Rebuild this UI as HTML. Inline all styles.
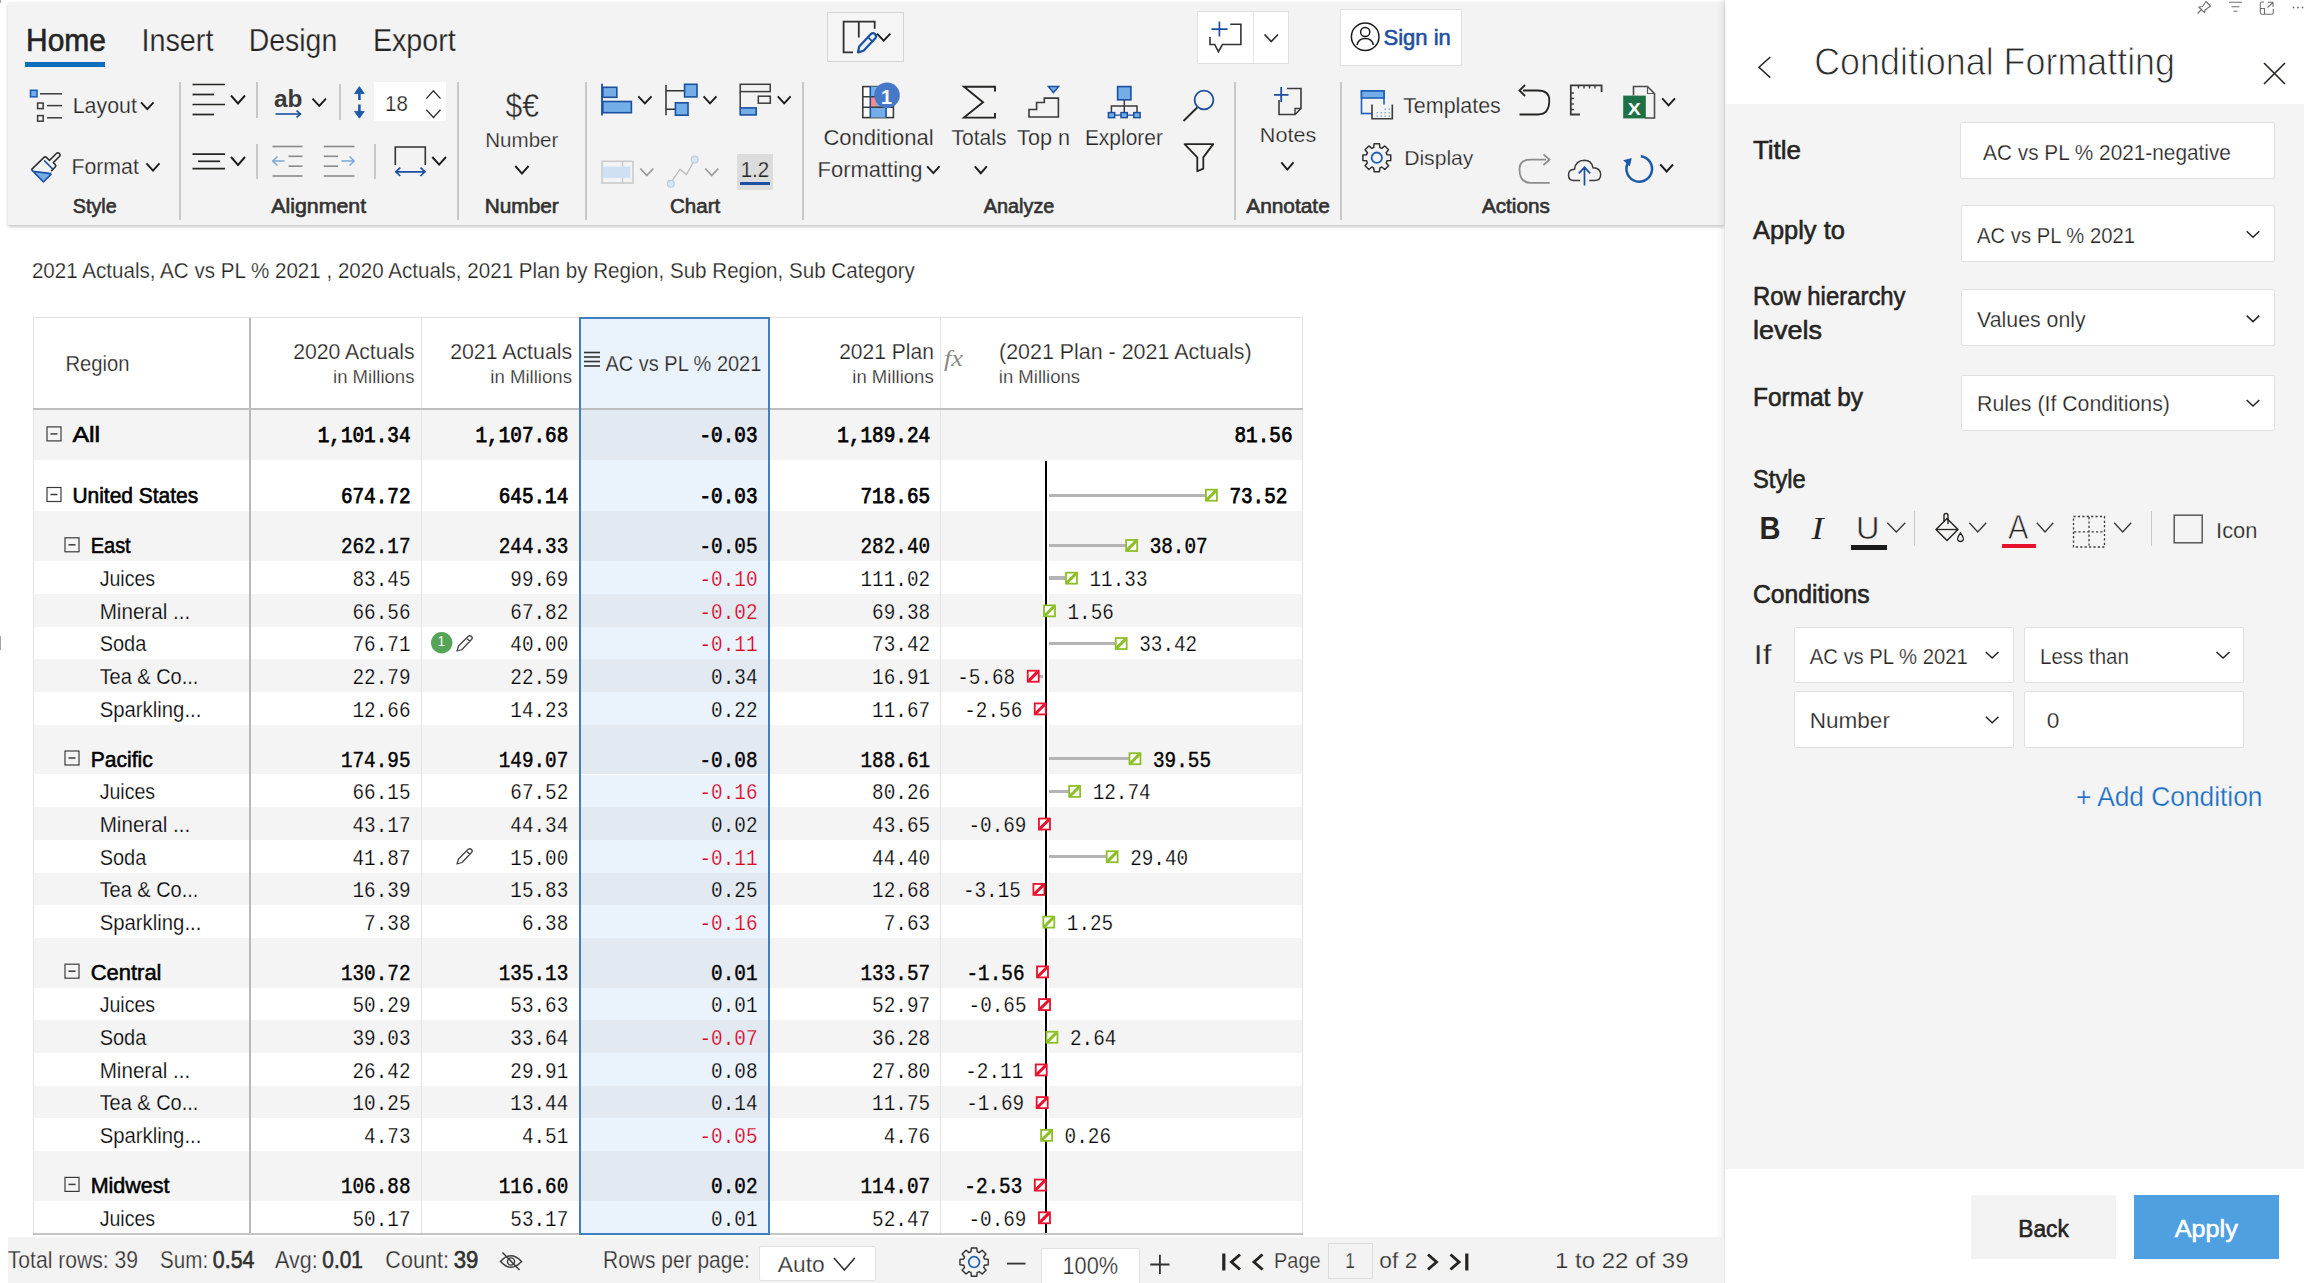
<!DOCTYPE html>
<html><head><meta charset="utf-8"><title>Conditional Formatting</title>
<style>
html,body{margin:0;padding:0;}
body{width:2304px;height:1283px;overflow:hidden;background:#fff;position:relative;font-family:"Liberation Sans", sans-serif;}
svg.ov{position:absolute;left:0;top:0;}
svg text{font-family:"Liberation Sans", sans-serif;white-space:pre;}
</style></head><body>
<div style="position:absolute;left:8px;top:2px;width:1716px;height:223px;background:#f3f3f3;box-shadow:0 2px 3px rgba(0,0,0,0.22)"></div>
<div style="position:absolute;left:25px;top:62px;width:80px;height:5px;background:#0f6cbd"></div>
<div style="position:absolute;left:827px;top:12px;width:77px;height:50px;box-sizing:border-box;border:1px solid #d4d4d4;background:#f5f5f5"></div>
<div style="position:absolute;left:1197px;top:11px;width:92px;height:53px;box-sizing:border-box;border:1px solid #e0e0e0;background:#fff"></div>
<div style="position:absolute;left:1253px;top:12px;width:1px;height:51px;background:#e6e6e6"></div>
<div style="position:absolute;left:1340px;top:9px;width:122px;height:57px;box-sizing:border-box;border:1px solid #e0e0e0;background:#fff"></div>
<div style="position:absolute;left:179.0px;top:82px;width:1.5px;height:138px;background:#c8c8c8"></div>
<div style="position:absolute;left:457.0px;top:82px;width:1.5px;height:138px;background:#c8c8c8"></div>
<div style="position:absolute;left:585.0px;top:82px;width:1.5px;height:138px;background:#c8c8c8"></div>
<div style="position:absolute;left:802.0px;top:82px;width:1.5px;height:138px;background:#c8c8c8"></div>
<div style="position:absolute;left:1234.0px;top:82px;width:1.5px;height:138px;background:#c8c8c8"></div>
<div style="position:absolute;left:1340.0px;top:82px;width:1.5px;height:138px;background:#c8c8c8"></div>
<div style="position:absolute;left:256px;top:82px;width:1.5px;height:36px;background:#c8c8c8"></div>
<div style="position:absolute;left:256px;top:144px;width:1.5px;height:35px;background:#c8c8c8"></div>
<div style="position:absolute;left:339px;top:84px;width:1.5px;height:36px;background:#c8c8c8"></div>
<div style="position:absolute;left:374px;top:144px;width:1.5px;height:35px;background:#c8c8c8"></div>
<div style="position:absolute;left:374px;top:82px;width:72px;height:39px;background:#fff"></div>
<div style="position:absolute;left:737px;top:154px;width:36px;height:36px;background:#dcdcdc"></div>
<div style="position:absolute;left:740px;top:182px;width:30px;height:2.5px;background:#1e4fa1"></div>
<div style="position:absolute;left:1725px;top:103.5px;width:579px;height:1065.3px;background:#f4f4f4"></div>
<div style="position:absolute;left:1716px;top:0px;width:9px;height:1283px;background:linear-gradient(to right, rgba(0,0,0,0), rgba(0,0,0,0.035) 70%, rgba(0,0,0,0.10))"></div>
<div style="position:absolute;left:1960px;top:122px;width:314.5px;height:57px;box-sizing:border-box;border:1px solid #e1e1e1;border-radius:2px;background:#fff"></div>
<div style="position:absolute;left:1961px;top:205px;width:313.5px;height:57.39999999999998px;box-sizing:border-box;border:1px solid #e1e1e1;border-radius:2px;background:#fff"></div>
<div style="position:absolute;left:1961px;top:289.4px;width:313.5px;height:57.10000000000002px;box-sizing:border-box;border:1px solid #e1e1e1;border-radius:2px;background:#fff"></div>
<div style="position:absolute;left:1961px;top:374.6px;width:313.5px;height:56.099999999999966px;box-sizing:border-box;border:1px solid #e1e1e1;border-radius:2px;background:#fff"></div>
<div style="position:absolute;left:1794.3px;top:626.6px;width:219.29999999999995px;height:56.39999999999998px;box-sizing:border-box;border:1px solid #e1e1e1;border-radius:2px;background:#fff"></div>
<div style="position:absolute;left:2024px;top:626.6px;width:220px;height:56.39999999999998px;box-sizing:border-box;border:1px solid #e1e1e1;border-radius:2px;background:#fff"></div>
<div style="position:absolute;left:1794.3px;top:691.4px;width:219.29999999999995px;height:56.30000000000007px;box-sizing:border-box;border:1px solid #e1e1e1;border-radius:2px;background:#fff"></div>
<div style="position:absolute;left:2024px;top:691.4px;width:220px;height:56.30000000000007px;box-sizing:border-box;border:1px solid #e1e1e1;border-radius:2px;background:#fff"></div>
<div style="position:absolute;left:1971px;top:1195px;width:145px;height:64px;background:#f3f3f3"></div>
<div style="position:absolute;left:2133.5px;top:1195px;width:145px;height:64px;background:#4fa0e0"></div>
<div style="position:absolute;left:7.5px;top:1237px;width:1716.5px;height:46px;background:#f3f3f3"></div>
<div style="position:absolute;left:759px;top:1246px;width:116.60000000000002px;height:35px;box-sizing:border-box;border:1px solid #e1e1e1;border-radius:2px;background:#fff"></div>
<div style="position:absolute;left:1041px;top:1248px;width:98.5px;height:42px;box-sizing:border-box;border:1px solid #e1e1e1;border-radius:2px;background:#fff"></div>
<div style="position:absolute;left:1328px;top:1243px;width:45px;height:36px;box-sizing:border-box;border:1px solid #dcdcdc;background:#f3f3f3"></div>
<div style="position:absolute;left:579.5px;top:317.5px;width:189.0px;height:91px;background:#eaf2fb"></div>
<div style="position:absolute;left:33.5px;top:409.0px;width:1269.0px;height:51px;background:#f4f4f4"></div>
<div style="position:absolute;left:579.5px;top:409.0px;width:189.0px;height:51px;background:#e2e9f1"></div>
<div style="position:absolute;left:579.5px;top:460.0px;width:189.0px;height:51px;background:#eaf2fb"></div>
<div style="position:absolute;left:33.5px;top:511.0px;width:1269.0px;height:50.3px;background:#f4f4f4"></div>
<div style="position:absolute;left:579.5px;top:511.0px;width:189.0px;height:50.3px;background:#e2e9f1"></div>
<div style="position:absolute;left:579.5px;top:561.3px;width:189.0px;height:32.68px;background:#eaf2fb"></div>
<div style="position:absolute;left:33.5px;top:593.9799999999999px;width:1269.0px;height:32.68px;background:#f4f4f4"></div>
<div style="position:absolute;left:579.5px;top:593.9799999999999px;width:189.0px;height:32.68px;background:#e2e9f1"></div>
<div style="position:absolute;left:579.5px;top:626.6599999999999px;width:189.0px;height:32.68px;background:#eaf2fb"></div>
<div style="position:absolute;left:33.5px;top:659.3399999999998px;width:1269.0px;height:32.68px;background:#f4f4f4"></div>
<div style="position:absolute;left:579.5px;top:659.3399999999998px;width:189.0px;height:32.68px;background:#e2e9f1"></div>
<div style="position:absolute;left:579.5px;top:692.0199999999998px;width:189.0px;height:32.68px;background:#eaf2fb"></div>
<div style="position:absolute;left:33.5px;top:724.6999999999997px;width:1269.0px;height:49.8px;background:#f4f4f4"></div>
<div style="position:absolute;left:579.5px;top:724.6999999999997px;width:189.0px;height:49.8px;background:#e2e9f1"></div>
<div style="position:absolute;left:579.5px;top:774.4999999999997px;width:189.0px;height:32.68px;background:#eaf2fb"></div>
<div style="position:absolute;left:33.5px;top:807.1799999999996px;width:1269.0px;height:32.68px;background:#f4f4f4"></div>
<div style="position:absolute;left:579.5px;top:807.1799999999996px;width:189.0px;height:32.68px;background:#e2e9f1"></div>
<div style="position:absolute;left:579.5px;top:839.8599999999996px;width:189.0px;height:32.68px;background:#eaf2fb"></div>
<div style="position:absolute;left:33.5px;top:872.5399999999995px;width:1269.0px;height:32.68px;background:#f4f4f4"></div>
<div style="position:absolute;left:579.5px;top:872.5399999999995px;width:189.0px;height:32.68px;background:#e2e9f1"></div>
<div style="position:absolute;left:579.5px;top:905.2199999999995px;width:189.0px;height:32.68px;background:#eaf2fb"></div>
<div style="position:absolute;left:33.5px;top:937.8999999999994px;width:1269.0px;height:49.8px;background:#f4f4f4"></div>
<div style="position:absolute;left:579.5px;top:937.8999999999994px;width:189.0px;height:49.8px;background:#e2e9f1"></div>
<div style="position:absolute;left:579.5px;top:987.6999999999994px;width:189.0px;height:32.68px;background:#eaf2fb"></div>
<div style="position:absolute;left:33.5px;top:1020.3799999999993px;width:1269.0px;height:32.68px;background:#f4f4f4"></div>
<div style="position:absolute;left:579.5px;top:1020.3799999999993px;width:189.0px;height:32.68px;background:#e2e9f1"></div>
<div style="position:absolute;left:579.5px;top:1053.0599999999993px;width:189.0px;height:32.68px;background:#eaf2fb"></div>
<div style="position:absolute;left:33.5px;top:1085.7399999999993px;width:1269.0px;height:32.68px;background:#f4f4f4"></div>
<div style="position:absolute;left:579.5px;top:1085.7399999999993px;width:189.0px;height:32.68px;background:#e2e9f1"></div>
<div style="position:absolute;left:579.5px;top:1118.4199999999994px;width:189.0px;height:32.68px;background:#eaf2fb"></div>
<div style="position:absolute;left:33.5px;top:1151.0999999999995px;width:1269.0px;height:49.8px;background:#f4f4f4"></div>
<div style="position:absolute;left:579.5px;top:1151.0999999999995px;width:189.0px;height:49.8px;background:#e2e9f1"></div>
<div style="position:absolute;left:579.5px;top:1200.8999999999994px;width:189.0px;height:32.68px;background:#eaf2fb"></div>
<div style="position:absolute;left:33px;top:317px;width:1269.5px;height:1px;background:#e3e3e3"></div>
<div style="position:absolute;left:33px;top:317px;width:1px;height:916px;background:#e3e3e3"></div>
<div style="position:absolute;left:1302.0px;top:317px;width:1px;height:916px;background:#e3e3e3"></div>
<div style="position:absolute;left:248.5px;top:317.5px;width:2px;height:915.5px;background:#b8b8b8"></div>
<div style="position:absolute;left:421px;top:317.5px;width:1px;height:915.5px;background:#e3e3e3"></div>
<div style="position:absolute;left:939.5px;top:317.5px;width:1px;height:915.5px;background:#e3e3e3"></div>
<div style="position:absolute;left:33px;top:408px;width:1269.5px;height:2px;background:#bdbdbd"></div>
<div style="position:absolute;left:33px;top:1232.5px;width:1269.5px;height:2px;background:#c4c4c4"></div>
<div style="position:absolute;left:578.5px;top:316.5px;width:191px;height:918px;box-sizing:border-box;border:2px solid #3f80c2"></div>
<div style="position:absolute;left:1043.4px;top:460.5px;width:5.2px;height:772.5px;background:#fff"></div>
<div style="position:absolute;left:1048.6px;top:493.5px;width:156.82000000000008px;height:3.4px;background:#b4b4b4"></div>
<div style="position:absolute;left:1048.6px;top:543.8px;width:77.05750000000003px;height:3.4px;background:#b4b4b4"></div>
<div style="position:absolute;left:1048.6px;top:576.48px;width:16.892500000000062px;height:3.4px;background:#b4b4b4"></div>
<div style="position:absolute;left:1048.6px;top:641.84px;width:66.59499999999994px;height:3.4px;background:#b4b4b4"></div>
<div style="position:absolute;left:1039.22px;top:674.52px;width:4.180000000000064px;height:3.4px;background:#b4b4b4"></div>
<div style="position:absolute;left:1048.6px;top:757.0px;width:80.38749999999996px;height:3.4px;background:#b4b4b4"></div>
<div style="position:absolute;left:1048.6px;top:789.68px;width:20.064999999999962px;height:3.4px;background:#b4b4b4"></div>
<div style="position:absolute;left:1048.6px;top:855.04px;width:57.55000000000009px;height:3.4px;background:#b4b4b4"></div>
<div style="position:absolute;left:1044.8px;top:460.5px;width:2.5px;height:772.5px;background:#000"></div>
<div style="position:absolute;left:1851px;top:545.4px;width:35.5px;height:4.3px;background:#1b1b1b"></div>
<div style="position:absolute;left:1914px;top:511px;width:1.2px;height:35px;background:#c8c8c8"></div>
<div style="position:absolute;left:2001.8px;top:544px;width:34px;height:3.5px;background:#e8112d"></div>
<div style="position:absolute;left:2150.5px;top:511px;width:1.2px;height:35px;background:#c8c8c8"></div>
<div style="position:absolute;left:0px;top:0px;width:1px;height:3px;background:#a8a8a8"></div>
<div style="position:absolute;left:0px;top:636px;width:1px;height:14px;background:#a4a4a4"></div>
<svg class="ov" width="2304" height="1283" viewBox="0 0 2304 1283">
<g fill="none" stroke-linecap="butt">
<polyline points="1770.3,57 1759,67.3 1770.3,77.6" stroke="#252423" stroke-width="1.5"/>
<path d="M2264,63 L2285,84 M2285,63 L2264,84" stroke="#252423" stroke-width="1.6"/>
<polyline points="2246.7,231.3 2253.0,237.3 2259.3,231.3" stroke="#252423" stroke-width="1.5" stroke-linejoin="miter"/>
<polyline points="2246.7,315.6 2253.0,321.6 2259.3,315.6" stroke="#252423" stroke-width="1.5" stroke-linejoin="miter"/>
<polyline points="2246.7,400 2253.0,406 2259.3,400" stroke="#252423" stroke-width="1.5" stroke-linejoin="miter"/>
<polyline points="1985.8,652 1992.15,658 1998.5,652" stroke="#252423" stroke-width="1.5" stroke-linejoin="miter"/>
<polyline points="2216.5,652 2223.05,658 2229.6,652" stroke="#252423" stroke-width="1.5" stroke-linejoin="miter"/>
<polyline points="1985.8,716.8 1992.15,722.8 1998.5,716.8" stroke="#252423" stroke-width="1.5" stroke-linejoin="miter"/>
<polyline points="834,1258 844.4,1270 854.8,1258" stroke="#323130" stroke-width="1.6" stroke-linejoin="miter"/>
<line x1="584" y1="352.5" x2="600" y2="352.5" stroke="#323130" stroke-width="1.6" />
<line x1="584" y1="357" x2="600" y2="357" stroke="#323130" stroke-width="1.6" />
<line x1="584" y1="361.5" x2="600" y2="361.5" stroke="#323130" stroke-width="1.6" />
<line x1="584" y1="366" x2="600" y2="366" stroke="#323130" stroke-width="1.6" />
<rect x="47.0" y="426.9" width="14" height="14" stroke="#3b3b3b" stroke-width="1.2"/>
<line x1="50.5" y1="433.9" x2="57.5" y2="433.9" stroke="#3b3b3b" stroke-width="1.5" />
<rect x="47.0" y="487.5" width="14" height="14" stroke="#3b3b3b" stroke-width="1.2"/>
<line x1="50.5" y1="494.5" x2="57.5" y2="494.5" stroke="#3b3b3b" stroke-width="1.5" />
<rect x="1205.92" y="489.70" width="11" height="11" stroke="#8cbf26" stroke-width="1.8" fill="#fff"/>
<line x1="1206.82" y1="499.80" x2="1216.02" y2="490.60" stroke="#8cbf26" stroke-width="3.0"/>
<rect x="65.0" y="537.8" width="14" height="14" stroke="#3b3b3b" stroke-width="1.2"/>
<line x1="68.5" y1="544.8" x2="75.5" y2="544.8" stroke="#3b3b3b" stroke-width="1.5" />
<rect x="1126.16" y="540.00" width="11" height="11" stroke="#8cbf26" stroke-width="1.8" fill="#fff"/>
<line x1="1127.06" y1="550.10" x2="1136.26" y2="540.90" stroke="#8cbf26" stroke-width="3.0"/>
<rect x="1065.99" y="572.68" width="11" height="11" stroke="#8cbf26" stroke-width="1.8" fill="#fff"/>
<line x1="1066.89" y1="582.78" x2="1076.09" y2="573.58" stroke="#8cbf26" stroke-width="3.0"/>
<rect x="1044.01" y="605.36" width="11" height="11" stroke="#8cbf26" stroke-width="1.8" fill="#fff"/>
<line x1="1044.91" y1="615.46" x2="1054.11" y2="606.26" stroke="#8cbf26" stroke-width="3.0"/>
<rect x="1115.69" y="638.04" width="11" height="11" stroke="#8cbf26" stroke-width="1.8" fill="#fff"/>
<line x1="1116.59" y1="648.14" x2="1125.79" y2="638.94" stroke="#8cbf26" stroke-width="3.0"/>
<rect x="1027.72" y="670.72" width="11" height="11" stroke="#e8112d" stroke-width="1.8" fill="#fff"/>
<line x1="1028.62" y1="680.82" x2="1037.82" y2="671.62" stroke="#e8112d" stroke-width="3.0"/>
<rect x="1034.74" y="703.40" width="11" height="11" stroke="#e8112d" stroke-width="1.8" fill="#fff"/>
<line x1="1035.64" y1="713.50" x2="1044.84" y2="704.30" stroke="#e8112d" stroke-width="3.0"/>
<rect x="65.0" y="751.0" width="14" height="14" stroke="#3b3b3b" stroke-width="1.2"/>
<line x1="68.5" y1="758.0" x2="75.5" y2="758.0" stroke="#3b3b3b" stroke-width="1.5" />
<rect x="1129.49" y="753.20" width="11" height="11" stroke="#8cbf26" stroke-width="1.8" fill="#fff"/>
<line x1="1130.39" y1="763.30" x2="1139.59" y2="754.10" stroke="#8cbf26" stroke-width="3.0"/>
<rect x="1069.16" y="785.88" width="11" height="11" stroke="#8cbf26" stroke-width="1.8" fill="#fff"/>
<line x1="1070.06" y1="795.98" x2="1079.26" y2="786.78" stroke="#8cbf26" stroke-width="3.0"/>
<rect x="1038.95" y="818.56" width="11" height="11" stroke="#e8112d" stroke-width="1.8" fill="#fff"/>
<line x1="1039.85" y1="828.66" x2="1049.05" y2="819.46" stroke="#e8112d" stroke-width="3.0"/>
<rect x="1106.65" y="851.24" width="11" height="11" stroke="#8cbf26" stroke-width="1.8" fill="#fff"/>
<line x1="1107.55" y1="861.34" x2="1116.75" y2="852.14" stroke="#8cbf26" stroke-width="3.0"/>
<rect x="1033.41" y="883.92" width="11" height="11" stroke="#e8112d" stroke-width="1.8" fill="#fff"/>
<line x1="1034.31" y1="894.02" x2="1043.51" y2="884.82" stroke="#e8112d" stroke-width="3.0"/>
<rect x="1043.31" y="916.60" width="11" height="11" stroke="#8cbf26" stroke-width="1.8" fill="#fff"/>
<line x1="1044.21" y1="926.70" x2="1053.41" y2="917.50" stroke="#8cbf26" stroke-width="3.0"/>
<rect x="65.0" y="964.2" width="14" height="14" stroke="#3b3b3b" stroke-width="1.2"/>
<line x1="68.5" y1="971.2" x2="75.5" y2="971.2" stroke="#3b3b3b" stroke-width="1.5" />
<rect x="1036.99" y="966.40" width="11" height="11" stroke="#e8112d" stroke-width="1.8" fill="#fff"/>
<line x1="1037.89" y1="976.50" x2="1047.09" y2="967.30" stroke="#e8112d" stroke-width="3.0"/>
<rect x="1039.04" y="999.08" width="11" height="11" stroke="#e8112d" stroke-width="1.8" fill="#fff"/>
<line x1="1039.94" y1="1009.18" x2="1049.14" y2="999.98" stroke="#e8112d" stroke-width="3.0"/>
<rect x="1046.44" y="1031.76" width="11" height="11" stroke="#8cbf26" stroke-width="1.8" fill="#fff"/>
<line x1="1047.34" y1="1041.86" x2="1056.54" y2="1032.66" stroke="#8cbf26" stroke-width="3.0"/>
<rect x="1035.75" y="1064.44" width="11" height="11" stroke="#e8112d" stroke-width="1.8" fill="#fff"/>
<line x1="1036.65" y1="1074.54" x2="1045.85" y2="1065.34" stroke="#e8112d" stroke-width="3.0"/>
<rect x="1036.70" y="1097.12" width="11" height="11" stroke="#e8112d" stroke-width="1.8" fill="#fff"/>
<line x1="1037.60" y1="1107.22" x2="1046.80" y2="1098.02" stroke="#e8112d" stroke-width="3.0"/>
<rect x="1041.09" y="1129.80" width="11" height="11" stroke="#8cbf26" stroke-width="1.8" fill="#fff"/>
<line x1="1041.98" y1="1139.90" x2="1051.18" y2="1130.70" stroke="#8cbf26" stroke-width="3.0"/>
<rect x="65.0" y="1177.4" width="14" height="14" stroke="#3b3b3b" stroke-width="1.2"/>
<line x1="68.5" y1="1184.4" x2="75.5" y2="1184.4" stroke="#3b3b3b" stroke-width="1.5" />
<rect x="1034.81" y="1179.60" width="11" height="11" stroke="#e8112d" stroke-width="1.8" fill="#fff"/>
<line x1="1035.71" y1="1189.70" x2="1044.91" y2="1180.50" stroke="#e8112d" stroke-width="3.0"/>
<rect x="1038.95" y="1212.28" width="11" height="11" stroke="#e8112d" stroke-width="1.8" fill="#fff"/>
<line x1="1039.85" y1="1222.38" x2="1049.05" y2="1213.18" stroke="#e8112d" stroke-width="3.0"/>
<circle cx="441.7" cy="642.7" r="10.7" fill="#56a457"/>
<path d="M457,651 L458.5,646 L468,636.5 Q470,635 471.5,636.5 Q473,638 471.5,639.5 L462,649.5 Z M466.5,638 L470,641.5" stroke="#444" stroke-width="1.3" stroke-linejoin="round"/>
<path d="M457,864 L458.5,859 L468,849.5 Q470,848 471.5,849.5 Q473,851 471.5,852.5 L462,862.5 Z M466.5,851 L470,854.5" stroke="#444" stroke-width="1.3" stroke-linejoin="round"/>
<path d="M853,52.4 H843.6 V21.7 H874.7 V28.8 M858.8,21.7 V37.4" stroke="#323130" stroke-width="1.8" fill="none" />
<path d="M858,52.4 L859.2,46.5 L870.9,34.1 A3.05,3.05 0 0 1 875.3,38.3 L863.6,50.7 Z" stroke="#1b4f9f" stroke-width="2.2" fill="#e8f2fd" stroke-linejoin="round"/>
<path d="M872.3,41.4 L867.9,37.2" stroke="#1b4f9f" stroke-width="1.8" fill="none" />
<polyline points="877,33.6 883.7,40.6 890.4,33.6" stroke="#1b1b1b" stroke-width="1.8" stroke-linejoin="miter"/>
<path d="M1230.2,24.2 H1240.9 V44.5 H1222.4 L1218.4,51.7 L1214.7,44.5 H1210 V37.1" stroke="#333" stroke-width="1.6" fill="none" stroke-linejoin="miter"/>
<path d="M1211.5,29.1 H1227.6 M1219.4,21.4 V36.5" stroke="#1b4f9f" stroke-width="1.7" fill="none" />
<polyline points="1264.5,34.5 1271.25,41.5 1278,34.5" stroke="#323130" stroke-width="1.8" stroke-linejoin="miter"/>
<circle cx="1365.2" cy="36.8" r="13.8" stroke="#1b1b1b" stroke-width="1.5" fill="none"/>
<circle cx="1365.2" cy="32" r="4.6" stroke="#1b1b1b" stroke-width="1.5" fill="none"/>
<path d="M1357,45 Q1358.5,38.5 1365.2,38.5 Q1372,38.5 1373.4,45" stroke="#1b1b1b" stroke-width="1.5" fill="none" />
<rect x="30.5" y="90.3" width="6.5" height="6.5" fill="#74aee8" stroke="#1b5fb8" stroke-width="1.6"/>
<rect x="37.6" y="103" width="5.6" height="5.6" stroke="#3b3b3b" stroke-width="1.5"/>
<rect x="37.6" y="115.6" width="5.6" height="5.6" stroke="#3b3b3b" stroke-width="1.5"/>
<line x1="40" y1="93.8" x2="62" y2="93.8" stroke="#3b3b3b" stroke-width="1.5" />
<line x1="47" y1="105.6" x2="62" y2="105.6" stroke="#3b3b3b" stroke-width="1.5" />
<line x1="47" y1="117.8" x2="62" y2="117.8" stroke="#3b3b3b" stroke-width="1.5" />
<polyline points="141,102.3 147.3,109.2 153.6,102.3" stroke="#1b1b1b" stroke-width="1.9" stroke-linejoin="miter"/>
<path d="M32.6,171.3 L51.2,173.6 L43.4,181.6 Z" stroke="none" stroke-width="0" fill="#74aee8" />
<path d="M31.4,169.6 L44,157.4 Q45.2,156.3 46.4,157.4 L49.5,160.4 L56.4,153.5 Q57.9,152.1 59.4,153.5 Q60.9,155 59.4,156.5 L53.3,162.6 L55,164.3 Q56.5,165.8 55,167.3 L51.2,171.1" stroke="#2b2b2b" stroke-width="1.5" fill="none" stroke-linejoin="round"/>
<path d="M31.4,169.6 L43.4,182 L51.5,173.9 M32.6,171.3 L51.2,173.6" stroke="#1b4f9f" stroke-width="1.6" fill="none" stroke-linejoin="round"/>
<path d="M44.1,160.4 L52.8,169.1" stroke="#1b4f9f" stroke-width="1.5" fill="none" />
<polyline points="146.5,163.4 153.0,170.6 159.5,163.4" stroke="#1b1b1b" stroke-width="1.9" stroke-linejoin="miter"/>
<line x1="192.5" y1="84.5" x2="225" y2="84.5" stroke="#252423" stroke-width="1.7" />
<line x1="192.5" y1="94.5" x2="214" y2="94.5" stroke="#252423" stroke-width="1.7" />
<line x1="192.5" y1="104.5" x2="225" y2="104.5" stroke="#252423" stroke-width="1.7" />
<line x1="192.5" y1="114.5" x2="214" y2="114.5" stroke="#252423" stroke-width="1.7" />
<polyline points="231,95.5 238.0,103.5 245,95.5" stroke="#1b1b1b" stroke-width="1.9" stroke-linejoin="miter"/>
<line x1="192.5" y1="154.2" x2="225" y2="154.2" stroke="#252423" stroke-width="1.7" />
<line x1="198" y1="161.3" x2="220" y2="161.3" stroke="#252423" stroke-width="1.7" />
<line x1="192.5" y1="168.6" x2="225" y2="168.6" stroke="#252423" stroke-width="1.7" />
<polyline points="231,157 238.0,165 245,157" stroke="#1b1b1b" stroke-width="1.9" stroke-linejoin="miter"/>
<line x1="275.5" y1="114" x2="300" y2="114" stroke="#1b4f9f" stroke-width="1.6" />
<path d="M296.5,110.6 L300.5,114 L296.5,117.4" stroke="#1b4f9f" stroke-width="1.6" fill="none" />
<polyline points="312.5,98.6 319.25,105.8 326,98.6" stroke="#1b1b1b" stroke-width="1.9" stroke-linejoin="miter"/>
<line x1="359.4" y1="92" x2="359.4" y2="100" stroke="#1b5aa8" stroke-width="2.6" />
<line x1="359.4" y1="104.5" x2="359.4" y2="112.5" stroke="#1b5aa8" stroke-width="2.6" />
<path d="M354.6,93.6 L359.4,86.6 L364.2,93.6 Z M354.6,111.4 L359.4,118.2 L364.2,111.4 Z" stroke="#1b5aa8" stroke-width="0.9" fill="#1b5aa8" stroke-linejoin="round"/>
<path d="M426.3,98.6 L433.4,90.9 L440.5,98.6" stroke="#323130" stroke-width="1.4" fill="none" />
<path d="M426.3,109.8 L433.4,117.5 L440.5,109.8" stroke="#323130" stroke-width="1.4" fill="none" />
<line x1="272.5" y1="146.5" x2="302.5" y2="146.5" stroke="#8a8a8a" stroke-width="1.6" />
<line x1="288.5" y1="156.3" x2="302.5" y2="156.3" stroke="#8a8a8a" stroke-width="1.6" />
<line x1="288.5" y1="166.2" x2="302.5" y2="166.2" stroke="#8a8a8a" stroke-width="1.6" />
<line x1="272.5" y1="176" x2="302.5" y2="176" stroke="#8a8a8a" stroke-width="1.6" />
<path d="M273,161 H284.5 M277.5,156.5 L272.8,161 L277.5,165.5" stroke="#7ea6d8" stroke-width="1.5" fill="none" />
<line x1="323.8" y1="146.5" x2="354.5" y2="146.5" stroke="#8a8a8a" stroke-width="1.6" />
<line x1="323.8" y1="156.3" x2="338" y2="156.3" stroke="#8a8a8a" stroke-width="1.6" />
<line x1="323.8" y1="166.2" x2="338" y2="166.2" stroke="#8a8a8a" stroke-width="1.6" />
<line x1="323.8" y1="176" x2="354.5" y2="176" stroke="#8a8a8a" stroke-width="1.6" />
<path d="M341.5,161 H354 M349.5,156.5 L354.2,161 L349.5,165.5" stroke="#7ea6d8" stroke-width="1.5" fill="none" />
<path d="M395.3,165 V147 H425.3 V165" stroke="#323130" stroke-width="1.6" fill="none" />
<path d="M396,171.8 H424.8 M400.3,167.6 L395.8,171.8 L400.3,176 M420.5,167.6 L425,171.8 L420.5,176" stroke="#1b4f9f" stroke-width="1.7" fill="none" />
<polyline points="432.3,157 439.15,164.6 446,157" stroke="#1b1b1b" stroke-width="1.9" stroke-linejoin="miter"/>
<polyline points="515.3,166 521.95,173.6 528.6,166" stroke="#1b1b1b" stroke-width="1.9" stroke-linejoin="miter"/>
<line x1="602" y1="83.7" x2="602" y2="115.5" stroke="#1b4f9f" stroke-width="1.8" />
<rect x="602.8" y="87.3" width="14" height="10" fill="#74aee8" stroke="#1b4f9f" stroke-width="1.6"/>
<rect x="602.8" y="101.5" width="28.6" height="11.2" fill="#74aee8" stroke="#1b4f9f" stroke-width="1.6"/>
<polyline points="638.3,96.3 644.9,103.4 651.5,96.3" stroke="#1b1b1b" stroke-width="1.9" stroke-linejoin="miter"/>
<path d="M666,85 V115.3 M666,90.8 H684.5 M666,109.2 H675" stroke="#323130" stroke-width="1.5" fill="none" />
<rect x="684.6" y="84.3" width="12.4" height="12.6" fill="#74aee8" stroke="#1b4f9f" stroke-width="1.6"/>
<rect x="675.4" y="102.8" width="12.6" height="12.4" fill="#74aee8" stroke="#1b4f9f" stroke-width="1.6"/>
<polyline points="703.6,96.3 710.0,103.4 716.4,96.3" stroke="#1b1b1b" stroke-width="1.9" stroke-linejoin="miter"/>
<rect x="740.2" y="84.3" width="30" height="7.3" stroke="#3b3b3b" stroke-width="1.5"/>
<rect x="758.3" y="96.2" width="12" height="7" stroke="#3b3b3b" stroke-width="1.5"/>
<line x1="740.2" y1="91.6" x2="740.2" y2="107.5" stroke="#3b3b3b" stroke-width="1.5" />
<rect x="740.2" y="107.9" width="16" height="7" fill="#74aee8" stroke="#1b4f9f" stroke-width="1.6"/>
<polyline points="777.8,96.3 784.2,103.4 790.6,96.3" stroke="#1b1b1b" stroke-width="1.9" stroke-linejoin="miter"/>
<rect x="602" y="161.3" width="31" height="21.7" stroke="#c8c8c8" stroke-width="1.5"/>
<rect x="602.8" y="166.5" width="27.5" height="11.5" fill="#cfe0f2" stroke="#c8c8c8" stroke-width="0"/>
<line x1="622.5" y1="161.3" x2="622.5" y2="166.5" stroke="#c8c8c8" stroke-width="1.4" />
<line x1="622.5" y1="178" x2="622.5" y2="183" stroke="#c8c8c8" stroke-width="1.4" />
<polyline points="640.3,168.5 646.8,175.5 653.3,168.5" stroke="#9a9a9a" stroke-width="1.8" stroke-linejoin="miter"/>
<path d="M670.5,183 L680,169.5 L686.5,174.5 L694.5,160" stroke="#b8b8b8" stroke-width="1.3" fill="none" />
<circle cx="670.8" cy="183.7" r="3.4" fill="#d6e6f6" stroke="#b9cde3" stroke-width="1.2"/>
<circle cx="694.7" cy="159.6" r="3.4" fill="#d6e6f6" stroke="#b9cde3" stroke-width="1.2"/>
<polyline points="705.3,168.5 711.8,175.5 718.3,168.5" stroke="#9a9a9a" stroke-width="1.8" stroke-linejoin="miter"/>
<rect x="862.8" y="86.6" width="30.6" height="31" fill="#fff" stroke="#3b3b3b" stroke-width="1.6"/>
<rect x="870.3" y="86.6" width="15.8" height="31" fill="#74aee8" stroke="none"/>
<rect x="870.3" y="96.9" width="6" height="10.4" fill="#ff8a8a" stroke="none"/>
<path d="M862.8,96.8 H893.4 M862.8,107.3 H893.4" stroke="#3b3b3b" stroke-width="1.5" fill="none" />
<path d="M870.3,86.6 V117.6 M886.1,86.6 V117.6" stroke="#1b4f9f" stroke-width="1.6" fill="none" />
<circle cx="887" cy="95.3" r="12.8" fill="#4678c8"/>
<polyline points="927.2,166.4 933.35,173.2 939.5,166.4" stroke="#1b1b1b" stroke-width="1.9" stroke-linejoin="miter"/>
<path d="M995,91.5 V86.8 H964 L983,102.3 L964,117.6 H995 V113" stroke="#252423" stroke-width="1.9" fill="none" stroke-linejoin="miter"/>
<polyline points="974.8,166.4 980.8,173.2 986.8,166.4" stroke="#1b1b1b" stroke-width="1.9" stroke-linejoin="miter"/>
<path d="M1029,117 V109.5 H1036.6 V102.5 H1044.3 V98.1 H1058.4 V117 Z" stroke="#3b3b3b" stroke-width="1.6" fill="none" />
<path d="M1048.3,86.5 H1058.6 L1053.45,92.6 Z" fill="#74aee8" stroke="#1b4f9f" stroke-width="1.4"/>
<rect x="1117.6" y="86.6" width="13.3" height="13.2" fill="#74aee8" stroke="#1b4f9f" stroke-width="1.6"/>
<path d="M1124.3,100 V112.5 M1111.4,112.5 V106 H1137 V112.5" stroke="#3b3b3b" stroke-width="1.5" fill="none" />
<rect x="1108.4" y="112.6" width="6.3" height="5" fill="#74aee8" stroke="#1b4f9f" stroke-width="1.5"/>
<rect x="1121" y="112.6" width="6.3" height="5" fill="#74aee8" stroke="#1b4f9f" stroke-width="1.5"/>
<rect x="1133.8" y="112.6" width="6.3" height="5" fill="#74aee8" stroke="#1b4f9f" stroke-width="1.5"/>
<path d="M1114.7,115.1 H1121 M1127.3,115.1 H1133.8" stroke="#1b4f9f" stroke-width="1.4" fill="none" />
<circle cx="1204" cy="100" r="9.4" stroke="#1b4f9f" stroke-width="1.8" fill="none"/>
<path d="M1183.5,121 L1197.2,107.5" stroke="#252423" stroke-width="1.8" fill="none" />
<path d="M1184.6,144.1 H1213.2 L1203.3,157.4 V168.6 L1197.3,171.3 V157.4 Z" stroke="#252423" stroke-width="1.8" fill="none" stroke-linejoin="round"/>
<path d="M1279,100 V114.5 H1295 L1301,108.5 V88.5 H1287" stroke="#3b3b3b" stroke-width="1.6" fill="none" />
<path d="M1295,114.5 V108.5 H1301" stroke="#3b3b3b" stroke-width="1.4" fill="none" />
<path d="M1274,94.8 H1288.5 M1281.2,87 V102" stroke="#1b4f9f" stroke-width="1.8" fill="none" />
<polyline points="1281.3,162.4 1287.4,169.6 1293.5,162.4" stroke="#1b1b1b" stroke-width="1.9" stroke-linejoin="miter"/>
<rect x="1361.5" y="91" width="22.5" height="22.5" stroke="#1b5fb8" stroke-width="1.6" fill="none"/>
<rect x="1361.5" y="91" width="22.5" height="7" fill="#74aee8" stroke="#1b5fb8" stroke-width="1.6"/>
<rect x="1372" y="104.5" width="20" height="14" fill="#f3f3f3" stroke="none"/>
<path d="M1372,104.5 V118.8 H1392.3 V104.5" stroke="#3b3b3b" stroke-width="1.6" fill="none" />
<rect x="1384.5" y="108.5" width="1.4" height="1.4" fill="#7ea6d8"/>
<rect x="1388.5" y="108.5" width="1.4" height="1.4" fill="#7ea6d8"/>
<rect x="1376.5" y="112" width="1.4" height="1.4" fill="#7ea6d8"/>
<rect x="1380.5" y="112" width="1.4" height="1.4" fill="#7ea6d8"/>
<rect x="1384.5" y="112" width="1.4" height="1.4" fill="#7ea6d8"/>
<rect x="1388.5" y="112" width="1.4" height="1.4" fill="#7ea6d8"/>
<rect x="1376.5" y="115.5" width="1.4" height="1.4" fill="#7ea6d8"/>
<rect x="1380.5" y="115.5" width="1.4" height="1.4" fill="#7ea6d8"/>
<rect x="1384.5" y="115.5" width="1.4" height="1.4" fill="#7ea6d8"/>
<rect x="1388.5" y="115.5" width="1.4" height="1.4" fill="#7ea6d8"/>
<polygon points="1386.95,154.63 1390.74,155.02 1390.74,160.38 1386.95,160.77 1386.59,161.76 1386.14,162.70 1388.56,165.66 1384.76,169.46 1381.80,167.04 1380.86,167.49 1379.87,167.85 1379.48,171.64 1374.12,171.64 1373.73,167.85 1372.74,167.49 1371.80,167.04 1368.84,169.46 1365.04,165.66 1367.46,162.70 1367.01,161.76 1366.65,160.77 1362.86,160.38 1362.86,155.02 1366.65,154.63 1367.01,153.64 1367.46,152.70 1365.04,149.74 1368.84,145.94 1371.80,148.36 1372.74,147.91 1373.73,147.55 1374.12,143.76 1379.48,143.76 1379.87,147.55 1380.86,147.91 1381.80,148.36 1384.76,145.94 1388.56,149.74 1386.14,152.70 1386.59,153.64" stroke="#323130" stroke-width="1.5" fill="none" stroke-linejoin="round"/>
<circle cx="1376.8" cy="157.7" r="5.2" stroke="#1b5fb8" stroke-width="1.8" fill="none"/>
<path d="M1523,90.5 H1538 Q1549.3,90.5 1549.3,100.3 Q1549.3,114.5 1538,114.5 H1519.5" stroke="#252423" stroke-width="1.8" fill="none" />
<path d="M1525,85 L1519.5,90.5 L1525,96" stroke="#252423" stroke-width="1.8" fill="none" />
<path d="M1546,159.6 H1530.5 Q1519.5,159.6 1519.5,169.3 Q1519.5,182.8 1530.5,182.8 H1549.7" stroke="#8c8c8c" stroke-width="1.8" fill="none" />
<path d="M1543.5,154.3 L1549.5,159.6 L1543.5,165" stroke="#8c8c8c" stroke-width="1.8" fill="none" />
<path d="M1580,114.5 H1570.8 V85.3 H1601.6 V92" stroke="#3b3b3b" stroke-width="1.8" fill="none" />
<line x1="1578.5" y1="85.3" x2="1578.5" y2="88.5" stroke="#3b3b3b" stroke-width="1.4" />
<line x1="1584" y1="85.3" x2="1584" y2="88.5" stroke="#3b3b3b" stroke-width="1.4" />
<line x1="1589.5" y1="85.3" x2="1589.5" y2="88.5" stroke="#3b3b3b" stroke-width="1.4" />
<line x1="1595" y1="85.3" x2="1595" y2="88.5" stroke="#3b3b3b" stroke-width="1.4" />
<line x1="1570.8" y1="93" x2="1574" y2="93" stroke="#3b3b3b" stroke-width="1.4" />
<line x1="1570.8" y1="98.5" x2="1574" y2="98.5" stroke="#3b3b3b" stroke-width="1.4" />
<line x1="1570.8" y1="104" x2="1574" y2="104" stroke="#3b3b3b" stroke-width="1.4" />
<line x1="1570.8" y1="109.5" x2="1574" y2="109.5" stroke="#3b3b3b" stroke-width="1.4" />
<path d="M1633.5,95.5 V86.5 H1647.5 L1654.5,93.5 V118 H1645" stroke="#4a4a4a" stroke-width="1.6" fill="none" />
<path d="M1647.5,86.5 V93.5 H1654.5" stroke="#5a5a5a" stroke-width="1.2" fill="none" />
<rect x="1623.2" y="95.6" width="22.6" height="22.8" fill="#1e7145"/>
<polyline points="1662.2,98.4 1668.6,105.4 1675,98.4" stroke="#1b1b1b" stroke-width="1.9" stroke-linejoin="miter"/>
<path d="M1580,180.5 H1573.5 Q1568.5,180.5 1568.5,175 Q1568.5,169.5 1574.5,169.3 Q1575.5,160.5 1584.5,160.3 Q1591.5,160.3 1593,167.7 Q1600.7,168 1600.7,174.5 Q1600.7,180.5 1594.5,180.5 H1589.3" stroke="#3b3b3b" stroke-width="1.5" fill="none" />
<path d="M1584.5,185.5 V167.8 M1578.8,173.3 L1584.5,167.3 L1590.2,173.3" stroke="#1b4f9f" stroke-width="1.7" fill="none" />
<path d="M1629.2,161 A12.8,12.8 0 1 0 1640.8,156.2" stroke="#1b5aa8" stroke-width="2.5" fill="none" />
<path d="M1623.2,160.3 L1631.8,158.1 L1629.8,166.6 Z" fill="#1b5aa8"/>
<polyline points="1660.3,164.5 1666.65,171.5 1673,164.5" stroke="#1b1b1b" stroke-width="1.9" stroke-linejoin="miter"/>
<path d="M2197.5,13.5 L2202,9 M2198.8,7 L2204.5,12.7 L2205,10 L2210.5,6 L2206,1.5 L2202.5,6.5 Z" stroke="#707070" stroke-width="1.1" fill="none" stroke-linejoin="round"/>
<path d="M2229,2.3 H2242 M2231.5,6.7 H2239.5 M2233.5,11.3 H2237.5" stroke="#707070" stroke-width="1.1" fill="none" />
<path d="M2264,2 H2262 Q2260.3,2 2260.3,4 V12.5 Q2260.3,14.3 2262,14.3 H2271.5 Q2273.3,14.3 2273.3,12.5 V9 M2260.3,8.5 H2264.5 V14.3 M2268,2.3 H2273 V7 M2273,2.3 L2267.5,7.5" stroke="#707070" stroke-width="1.1" fill="none" />
<circle cx="2293.5" cy="7.5" r="0.9" fill="#707070"/>
<circle cx="2298" cy="7.5" r="0.9" fill="#707070"/>
<circle cx="2302.5" cy="7.5" r="0.9" fill="#707070"/>
<polyline points="1887.3,522.8 1896.3,532 1905.3,522.8" stroke="#3b3b3b" stroke-width="1.4" stroke-linejoin="miter"/>
<path d="M1936,529.5 L1947,518.5 L1958,529.5 L1947,540.5 Z" stroke="#252423" stroke-width="1.5" fill="none" stroke-linejoin="round"/>
<path d="M1944,521.5 V515.5 Q1944,513.5 1946,513.5 Q1948,513.5 1948,515.5 V524" stroke="#252423" stroke-width="1.4" fill="none" />
<path d="M1936.5,529.5 H1957.5" stroke="#252423" stroke-width="1.3" fill="none" />
<path d="M1960.5,533 Q1956.5,538.5 1958,540.2 Q1960.5,542.8 1963,540.2 Q1964.5,538.5 1960.5,533 Z" stroke="#252423" stroke-width="1.3" fill="none" />
<polyline points="1969.3,522.8 1977.75,532 1986.2,522.8" stroke="#3b3b3b" stroke-width="1.4" stroke-linejoin="miter"/>
<polyline points="2036.8,522.8 2045.0500000000002,532 2053.3,522.8" stroke="#3b3b3b" stroke-width="1.4" stroke-linejoin="miter"/>
<rect x="2073.5" y="516.5" width="31" height="30.5" stroke="#3b3b3b" stroke-width="1.3" stroke-dasharray="2.2,2.2" fill="none"/>
<path d="M2089,517 V547 M2074,531.8 H2104.5" stroke="#3b3b3b" stroke-width="1.3" fill="none" stroke-dasharray="2.2,2.2"/>
<polyline points="2114.2,522.8 2122.7,532 2131.2,522.8" stroke="#3b3b3b" stroke-width="1.4" stroke-linejoin="miter"/>
<rect x="2174.2" y="515.2" width="28" height="27.6" stroke="#5a5a5a" stroke-width="1.5" fill="none"/>
<path d="M500.5,1261.5 Q511,1250 521.5,1261.5 Q511,1273 500.5,1261.5 Z" stroke="#3b3b3b" stroke-width="1.4" fill="none" />
<circle cx="511" cy="1261.5" r="3.6" stroke="#3b3b3b" stroke-width="1.4" fill="none"/>
<path d="M502.5,1252.5 L519.5,1270" stroke="#3b3b3b" stroke-width="1.5" fill="none" />
<polygon points="984.44,1258.97 988.24,1259.38 988.24,1264.82 984.44,1265.23 984.08,1266.23 983.62,1267.20 986.02,1270.18 982.18,1274.02 979.20,1271.62 978.23,1272.08 977.23,1272.44 976.82,1276.24 971.38,1276.24 970.97,1272.44 969.97,1272.08 969.00,1271.62 966.02,1274.02 962.18,1270.18 964.58,1267.20 964.12,1266.23 963.76,1265.23 959.96,1264.82 959.96,1259.38 963.76,1258.97 964.12,1257.97 964.58,1257.00 962.18,1254.02 966.02,1250.18 969.00,1252.58 969.97,1252.12 970.97,1251.76 971.38,1247.96 976.82,1247.96 977.23,1251.76 978.23,1252.12 979.20,1252.58 982.18,1250.18 986.02,1254.02 983.62,1257.00 984.08,1257.97" stroke="#323130" stroke-width="1.4" fill="none" stroke-linejoin="round"/>
<circle cx="974.1" cy="1262.1" r="5.4" stroke="#1b5fb8" stroke-width="1.7" fill="none"/>
<line x1="1007" y1="1263.6" x2="1025.5" y2="1263.6" stroke="#323130" stroke-width="1.8" />
<path d="M1150.3,1264.5 H1169.5 M1159.9,1254.8 V1274" stroke="#323130" stroke-width="1.8" fill="none" />
<path d="M1223.8,1253.5 V1270.5" stroke="#252423" stroke-width="3.2" fill="none" />
<path d="M1240,1254.5 L1231.5,1262 L1240,1269.5" stroke="#252423" stroke-width="2.9" fill="none" />
<path d="M1262.5,1254.5 L1254,1262 L1262.5,1269.5" stroke="#252423" stroke-width="2.9" fill="none" />
<path d="M1428,1254.5 L1436.5,1262 L1428,1269.5" stroke="#252423" stroke-width="2.9" fill="none" />
<path d="M1450.5,1254.5 L1459,1262 L1450.5,1269.5" stroke="#252423" stroke-width="2.9" fill="none" />
<path d="M1466.8,1253.5 V1270.5" stroke="#252423" stroke-width="3.2" fill="none" />
</g>
<text x="26.06" y="51" font-size="30.96" fill="#252423" stroke="#252423" stroke-width="0.6" textLength="79.88" lengthAdjust="spacingAndGlyphs">Home</text>
<text x="141.46" y="51" font-size="30.96" fill="#252423" textLength="71.98" lengthAdjust="spacingAndGlyphs" style="stroke:#f3f3f3;stroke-width:0.25;">Insert</text>
<text x="248.76" y="51" font-size="30.96" fill="#252423" textLength="88.48" lengthAdjust="spacingAndGlyphs" style="stroke:#f3f3f3;stroke-width:0.25;">Design</text>
<text x="372.96" y="51" font-size="30.96" fill="#252423" textLength="82.68" lengthAdjust="spacingAndGlyphs" style="stroke:#f3f3f3;stroke-width:0.25;">Export</text>
<text x="1383.52" y="44.8" font-size="22.09" fill="#1e4fa1" stroke="#1e4fa1" stroke-width="0.6" textLength="67.27" lengthAdjust="spacingAndGlyphs">Sign in</text>
<text x="72.81" y="212.8" font-size="19.77" fill="#323130" stroke="#323130" stroke-width="0.6" textLength="43.88" lengthAdjust="spacingAndGlyphs">Style</text>
<text x="271.21" y="212.8" font-size="19.77" fill="#323130" stroke="#323130" stroke-width="0.6" textLength="94.98" lengthAdjust="spacingAndGlyphs">Alignment</text>
<text x="484.71" y="212.8" font-size="19.77" fill="#323130" stroke="#323130" stroke-width="0.6" textLength="74.08" lengthAdjust="spacingAndGlyphs">Number</text>
<text x="670.01" y="212.8" font-size="19.77" fill="#323130" stroke="#323130" stroke-width="0.6" textLength="50.18" lengthAdjust="spacingAndGlyphs">Chart</text>
<text x="983.71" y="212.8" font-size="19.77" fill="#323130" stroke="#323130" stroke-width="0.6" textLength="70.68" lengthAdjust="spacingAndGlyphs">Analyze</text>
<text x="1246.21" y="212.8" font-size="19.77" fill="#323130" stroke="#323130" stroke-width="0.6" textLength="83.58" lengthAdjust="spacingAndGlyphs">Annotate</text>
<text x="1481.91" y="212.8" font-size="19.77" fill="#323130" stroke="#323130" stroke-width="0.6" textLength="67.88" lengthAdjust="spacingAndGlyphs">Actions</text>
<text x="72.73" y="113" font-size="21.8" fill="#252423" textLength="64.14" lengthAdjust="spacingAndGlyphs" style="stroke:#f3f3f3;stroke-width:0.25;">Layout</text>
<text x="71.43" y="174" font-size="21.8" fill="#252423" textLength="67.44" lengthAdjust="spacingAndGlyphs" style="stroke:#f3f3f3;stroke-width:0.25;">Format</text>
<text x="485.2" y="146.7" font-size="19.91" fill="#252423" textLength="73.19" lengthAdjust="spacingAndGlyphs" style="stroke:#f3f3f3;stroke-width:0.25;">Number</text>
<text x="823.4" y="144.6" font-size="22.38" fill="#252423" textLength="110.29" lengthAdjust="spacingAndGlyphs" style="stroke:#f3f3f3;stroke-width:0.25;">Conditional</text>
<text x="817.6" y="177" font-size="22.38" fill="#252423" textLength="104.89" lengthAdjust="spacingAndGlyphs" style="stroke:#f3f3f3;stroke-width:0.25;">Formatting</text>
<text x="951.5" y="144.6" font-size="22.38" fill="#252423" textLength="54.89" lengthAdjust="spacingAndGlyphs" style="stroke:#f3f3f3;stroke-width:0.25;">Totals</text>
<text x="1017.1" y="144.6" font-size="22.38" fill="#252423" textLength="52.99" lengthAdjust="spacingAndGlyphs" style="stroke:#f3f3f3;stroke-width:0.25;">Top n</text>
<text x="1084.9" y="144.6" font-size="22.38" fill="#252423" textLength="77.99" lengthAdjust="spacingAndGlyphs" style="stroke:#f3f3f3;stroke-width:0.25;">Explorer</text>
<text x="1259.87" y="142" font-size="20.78" fill="#252423" textLength="56.36" lengthAdjust="spacingAndGlyphs" style="stroke:#f3f3f3;stroke-width:0.25;">Notes</text>
<text x="1403.15" y="113.3" font-size="21.37" fill="#252423" textLength="97.71" lengthAdjust="spacingAndGlyphs" style="stroke:#f3f3f3;stroke-width:0.25;">Templates</text>
<text x="1404.16" y="165" font-size="20.93" fill="#252423" textLength="69.27" lengthAdjust="spacingAndGlyphs" style="stroke:#f3f3f3;stroke-width:0.25;">Display</text>
<text x="385.12" y="111" font-size="22.09" fill="#252423" textLength="22.77" lengthAdjust="spacingAndGlyphs" style="stroke:#ffffff;stroke-width:0.25;">18</text>
<text x="505.5" y="117" font-size="33" fill="#2b2b2b" textLength="33.5" lengthAdjust="spacingAndGlyphs" style="stroke:#f3f3f3;stroke-width:0.4">$€</text>
<text x="740.65" y="177" font-size="21.37" fill="#252423" textLength="28.51" lengthAdjust="spacingAndGlyphs" style="stroke:#dcdcdc;stroke-width:0.25;">1.2</text>
<text x="1814.17" y="75.4" font-size="38.37" fill="#2b2b2b" textLength="360.87" lengthAdjust="spacingAndGlyphs" style="stroke:#fff;stroke-width:0.9">Conditional Formatting</text>
<text x="1752.94" y="158.5" font-size="26.45" fill="#252423" stroke="#252423" stroke-width="0.6" textLength="48.12" lengthAdjust="spacingAndGlyphs">Title</text>
<text x="1752.94" y="238.5" font-size="26.45" fill="#252423" stroke="#252423" stroke-width="0.6" textLength="91.92" lengthAdjust="spacingAndGlyphs">Apply to</text>
<text x="1752.94" y="304.5" font-size="26.45" fill="#252423" stroke="#252423" stroke-width="0.6" textLength="152.62" lengthAdjust="spacingAndGlyphs">Row hierarchy</text>
<text x="1752.94" y="338.5" font-size="26.45" fill="#252423" stroke="#252423" stroke-width="0.6" textLength="69.12" lengthAdjust="spacingAndGlyphs">levels</text>
<text x="1752.94" y="406" font-size="26.45" fill="#252423" stroke="#252423" stroke-width="0.6" textLength="110.12" lengthAdjust="spacingAndGlyphs">Format by</text>
<text x="1752.98" y="487.5" font-size="25.44" fill="#252423" stroke="#252423" stroke-width="0.6" textLength="52.74" lengthAdjust="spacingAndGlyphs">Style</text>
<text x="1752.98" y="602.7" font-size="25.44" fill="#252423" stroke="#252423" stroke-width="0.6" textLength="116.64" lengthAdjust="spacingAndGlyphs">Conditions</text>
<text x="1753.87" y="664" font-size="28.34" fill="#252423" textLength="17.67" lengthAdjust="spacingAndGlyphs" style="stroke:#f4f4f4;stroke-width:0.25;">If</text>
<text x="1983.08" y="159.6" font-size="22.97" fill="#252423" textLength="247.84" lengthAdjust="spacingAndGlyphs" style="stroke:#ffffff;stroke-width:0.25;">AC vs PL % 2021-negative</text>
<text x="1977.08" y="242.7" font-size="22.97" fill="#252423" textLength="157.84" lengthAdjust="spacingAndGlyphs" style="stroke:#ffffff;stroke-width:0.25;">AC vs PL % 2021</text>
<text x="1977.08" y="327" font-size="22.97" fill="#252423" textLength="108.64" lengthAdjust="spacingAndGlyphs" style="stroke:#ffffff;stroke-width:0.25;">Values only</text>
<text x="1977.08" y="411" font-size="22.97" fill="#252423" textLength="192.84" lengthAdjust="spacingAndGlyphs" style="stroke:#ffffff;stroke-width:0.25;">Rules (If Conditions)</text>
<text x="1809.69" y="663.6" font-size="22.67" fill="#252423" textLength="158.01" lengthAdjust="spacingAndGlyphs" style="stroke:#ffffff;stroke-width:0.25;">AC vs PL % 2021</text>
<text x="2040.09" y="663.6" font-size="22.67" fill="#252423" textLength="88.81" lengthAdjust="spacingAndGlyphs" style="stroke:#ffffff;stroke-width:0.25;">Less than</text>
<text x="1809.69" y="728" font-size="22.67" fill="#252423" textLength="80.21" lengthAdjust="spacingAndGlyphs" style="stroke:#ffffff;stroke-width:0.25;">Number</text>
<text x="2046.69" y="728" font-size="22.67" fill="#252423" textLength="12.61" lengthAdjust="spacingAndGlyphs" style="stroke:#ffffff;stroke-width:0.25;">0</text>
<text x="2075.93" y="806" font-size="26.74" fill="#1a6fc4" textLength="186.54" lengthAdjust="spacingAndGlyphs" style="stroke:#f4f4f4;stroke-width:0.25;">+ Add Condition</text>
<text x="2018.32" y="1236.8" font-size="24.42" fill="#252423" stroke="#252423" stroke-width="0.6" textLength="50.45" lengthAdjust="spacingAndGlyphs">Back</text>
<text x="2174.82" y="1236.8" font-size="24.42" fill="#ffffff" stroke="#ffffff" stroke-width="0.6" textLength="62.95" lengthAdjust="spacingAndGlyphs">Apply</text>
<text x="31.89" y="277.7" font-size="22.82" fill="#252423" textLength="883.03" lengthAdjust="spacingAndGlyphs" style="stroke:#ffffff;stroke-width:0.25;">2021 Actuals, AC vs PL % 2021 , 2020 Actuals, 2021 Plan by Region, Sub Region, Sub Category</text>
<text x="7.77" y="1268" font-size="23.26" fill="#323130" textLength="130.36" lengthAdjust="spacingAndGlyphs" style="stroke:#f3f3f3;stroke-width:0.25;">Total rows: 39</text>
<text x="160.07" y="1268" font-size="23.26" fill="#323130" textLength="48.06" lengthAdjust="spacingAndGlyphs" style="stroke:#f3f3f3;stroke-width:0.25;">Sum:</text>
<text x="212.87" y="1268" font-size="23.26" fill="#323130" stroke="#323130" stroke-width="0.6" textLength="41.56" lengthAdjust="spacingAndGlyphs">0.54</text>
<text x="275.07" y="1268" font-size="23.26" fill="#323130" textLength="42.66" lengthAdjust="spacingAndGlyphs" style="stroke:#f3f3f3;stroke-width:0.25;">Avg:</text>
<text x="322.37" y="1268" font-size="23.26" fill="#323130" stroke="#323130" stroke-width="0.6" textLength="40.56" lengthAdjust="spacingAndGlyphs">0.01</text>
<text x="385.37" y="1268" font-size="23.26" fill="#323130" textLength="63.56" lengthAdjust="spacingAndGlyphs" style="stroke:#f3f3f3;stroke-width:0.25;">Count:</text>
<text x="453.67" y="1268" font-size="23.26" fill="#323130" stroke="#323130" stroke-width="0.6" textLength="24.66" lengthAdjust="spacingAndGlyphs">39</text>
<text x="603.07" y="1268" font-size="23.26" fill="#323130" textLength="146.86" lengthAdjust="spacingAndGlyphs" style="stroke:#f3f3f3;stroke-width:0.25;">Rows per page:</text>
<text x="777.89" y="1271.6" font-size="22.67" fill="#323130" textLength="46.81" lengthAdjust="spacingAndGlyphs" style="stroke:#ffffff;stroke-width:0.25;">Auto</text>
<text x="1062.47" y="1273.6" font-size="23.26" fill="#323130" textLength="55.66" lengthAdjust="spacingAndGlyphs" style="stroke:#ffffff;stroke-width:0.25;">100%</text>
<text x="1274.09" y="1268" font-size="22.67" fill="#323130" textLength="46.41" lengthAdjust="spacingAndGlyphs" style="stroke:#f3f3f3;stroke-width:0.25;">Page</text>
<text x="1345.29" y="1268" font-size="22.67" fill="#323130" textLength="9.61" lengthAdjust="spacingAndGlyphs" style="stroke:#f3f3f3;stroke-width:0.25;">1</text>
<text x="1379.39" y="1268" font-size="22.67" fill="#323130" textLength="37.91" lengthAdjust="spacingAndGlyphs" style="stroke:#f3f3f3;stroke-width:0.25;">of 2</text>
<text x="1555.08" y="1267.7" font-size="22.97" fill="#323130" textLength="133.44" lengthAdjust="spacingAndGlyphs" style="stroke:#f3f3f3;stroke-width:0.25;">1 to 22 of 39</text>
<text x="65.45" y="370.8" font-size="21.37" fill="#252423" textLength="64.11" lengthAdjust="spacingAndGlyphs" style="stroke:#ffffff;stroke-width:0.25;">Region</text>
<text x="293.13" y="359.2" font-size="21.8" fill="#252423" textLength="121.49" lengthAdjust="spacingAndGlyphs" style="stroke:#ffffff;stroke-width:0.25;">2020 Actuals</text>
<text x="333.04" y="382.7" font-size="17.73" fill="#252423" textLength="81.42" lengthAdjust="spacingAndGlyphs" style="stroke:#ffffff;stroke-width:0.25;">in Millions</text>
<text x="450.13" y="359.2" font-size="21.8" fill="#252423" textLength="121.99" lengthAdjust="spacingAndGlyphs" style="stroke:#ffffff;stroke-width:0.25;">2021 Actuals</text>
<text x="490.29" y="382.7" font-size="17.73" fill="#252423" textLength="81.67" lengthAdjust="spacingAndGlyphs" style="stroke:#ffffff;stroke-width:0.25;">in Millions</text>
<text x="605.44" y="370.6" font-size="21.51" fill="#252423" textLength="155.92" lengthAdjust="spacingAndGlyphs" style="stroke:#eaf2fb;stroke-width:0.25;">AC vs PL % 2021</text>
<text x="839.13" y="359.2" font-size="21.8" fill="#252423" textLength="94.74" lengthAdjust="spacingAndGlyphs" style="stroke:#ffffff;stroke-width:0.25;">2021 Plan</text>
<text x="852.29" y="382.7" font-size="17.73" fill="#252423" textLength="81.42" lengthAdjust="spacingAndGlyphs" style="stroke:#ffffff;stroke-width:0.25;">in Millions</text>
<text x="999.03" y="359" font-size="21.8" fill="#252423" textLength="252.54" lengthAdjust="spacingAndGlyphs" style="stroke:#ffffff;stroke-width:0.25;">(2021 Plan - 2021 Actuals)</text>
<text x="998.79" y="382.6" font-size="17.73" fill="#252423" textLength="81.32" lengthAdjust="spacingAndGlyphs" style="stroke:#ffffff;stroke-width:0.25;">in Millions</text>
<text x="944" y="365.5" font-size="23" fill="#8a8a8a" textLength="19" lengthAdjust="spacingAndGlyphs" style="font-family:'Liberation Serif',serif;font-style:italic">fx</text>
<text x="72.4" y="442.4" font-size="22.38" fill="#000000" stroke="#000000" stroke-width="0.6" textLength="27.79" lengthAdjust="spacingAndGlyphs">All</text>
<text x="410.5" y="442.4" font-size="21.5" fill="#000000" stroke="#000000" stroke-width="0.75" text-anchor="end" textLength="92.8" lengthAdjust="spacingAndGlyphs" style="font-family:'Liberation Mono',monospace;">1,101.34</text>
<text x="568.3" y="442.4" font-size="21.5" fill="#000000" stroke="#000000" stroke-width="0.75" text-anchor="end" textLength="92.8" lengthAdjust="spacingAndGlyphs" style="font-family:'Liberation Mono',monospace;">1,107.68</text>
<text x="757.5" y="442.4" font-size="21.5" fill="#000000" stroke="#000000" stroke-width="0.75" text-anchor="end" textLength="58.0" lengthAdjust="spacingAndGlyphs" style="font-family:'Liberation Mono',monospace;">-0.03</text>
<text x="930.1" y="442.4" font-size="21.5" fill="#000000" stroke="#000000" stroke-width="0.75" text-anchor="end" textLength="92.8" lengthAdjust="spacingAndGlyphs" style="font-family:'Liberation Mono',monospace;">1,189.24</text>
<text x="1292.5" y="442.4" font-size="21.5" fill="#000000" stroke="#000000" stroke-width="0.75" text-anchor="end" textLength="58.0" lengthAdjust="spacingAndGlyphs" style="font-family:'Liberation Mono',monospace;">81.56</text>
<text x="72.4" y="503.0" font-size="22.38" fill="#000000" stroke="#000000" stroke-width="0.6" textLength="125.79" lengthAdjust="spacingAndGlyphs">United States</text>
<text x="410.5" y="503.0" font-size="21.5" fill="#000000" stroke="#000000" stroke-width="0.75" text-anchor="end" textLength="69.6" lengthAdjust="spacingAndGlyphs" style="font-family:'Liberation Mono',monospace;">674.72</text>
<text x="568.3" y="503.0" font-size="21.5" fill="#000000" stroke="#000000" stroke-width="0.75" text-anchor="end" textLength="69.6" lengthAdjust="spacingAndGlyphs" style="font-family:'Liberation Mono',monospace;">645.14</text>
<text x="757.5" y="503.0" font-size="21.5" fill="#000000" stroke="#000000" stroke-width="0.75" text-anchor="end" textLength="58.0" lengthAdjust="spacingAndGlyphs" style="font-family:'Liberation Mono',monospace;">-0.03</text>
<text x="930.1" y="503.0" font-size="21.5" fill="#000000" stroke="#000000" stroke-width="0.75" text-anchor="end" textLength="69.6" lengthAdjust="spacingAndGlyphs" style="font-family:'Liberation Mono',monospace;">718.65</text>
<text x="1229.42" y="503.0" font-size="21.5" fill="#000000" stroke="#000000" stroke-width="0.75" textLength="58.0" lengthAdjust="spacingAndGlyphs" style="font-family:'Liberation Mono',monospace;">73.52</text>
<text x="90.7" y="553.3" font-size="22.38" fill="#000000" stroke="#000000" stroke-width="0.55" textLength="39.99" lengthAdjust="spacingAndGlyphs">East</text>
<text x="410.5" y="553.3" font-size="21.5" fill="#000000" stroke="#000000" stroke-width="0.4" text-anchor="end" textLength="69.6" lengthAdjust="spacingAndGlyphs" style="font-family:'Liberation Mono',monospace;">262.17</text>
<text x="568.3" y="553.3" font-size="21.5" fill="#000000" stroke="#000000" stroke-width="0.4" text-anchor="end" textLength="69.6" lengthAdjust="spacingAndGlyphs" style="font-family:'Liberation Mono',monospace;">244.33</text>
<text x="757.5" y="553.3" font-size="21.5" fill="#000000" stroke="#000000" stroke-width="0.4" text-anchor="end" textLength="58.0" lengthAdjust="spacingAndGlyphs" style="font-family:'Liberation Mono',monospace;">-0.05</text>
<text x="930.1" y="553.3" font-size="21.5" fill="#000000" stroke="#000000" stroke-width="0.4" text-anchor="end" textLength="69.6" lengthAdjust="spacingAndGlyphs" style="font-family:'Liberation Mono',monospace;">282.40</text>
<text x="1149.66" y="553.3" font-size="21.5" fill="#000000" stroke="#000000" stroke-width="0.4" textLength="58.0" lengthAdjust="spacingAndGlyphs" style="font-family:'Liberation Mono',monospace;">38.07</text>
<text x="99.63" y="585.98" font-size="21.8" fill="#000000" textLength="55.54" lengthAdjust="spacingAndGlyphs" style="stroke:#ffffff;stroke-width:0.25;">Juices</text>
<text x="410.5" y="585.98" font-size="21.5" fill="#000000" text-anchor="end" textLength="58.0" lengthAdjust="spacingAndGlyphs" style="font-family:'Liberation Mono',monospace;stroke:#ffffff;stroke-width:0.25;">83.45</text>
<text x="568.3" y="585.98" font-size="21.5" fill="#000000" text-anchor="end" textLength="58.0" lengthAdjust="spacingAndGlyphs" style="font-family:'Liberation Mono',monospace;stroke:#ffffff;stroke-width:0.25;">99.69</text>
<text x="757.5" y="585.98" font-size="21.5" fill="#d9001b" text-anchor="end" textLength="58.0" lengthAdjust="spacingAndGlyphs" style="font-family:'Liberation Mono',monospace;stroke:#eaf2fb;stroke-width:0.25;">-0.10</text>
<text x="930.1" y="585.98" font-size="21.5" fill="#000000" text-anchor="end" textLength="69.6" lengthAdjust="spacingAndGlyphs" style="font-family:'Liberation Mono',monospace;stroke:#ffffff;stroke-width:0.25;">111.02</text>
<text x="1089.49" y="585.98" font-size="21.5" fill="#000000" textLength="58.0" lengthAdjust="spacingAndGlyphs" style="font-family:'Liberation Mono',monospace;stroke:#ffffff;stroke-width:0.25;">11.33</text>
<text x="99.63" y="618.66" font-size="21.8" fill="#000000" textLength="90.64" lengthAdjust="spacingAndGlyphs" style="stroke:#f4f4f4;stroke-width:0.25;">Mineral ...</text>
<text x="410.5" y="618.66" font-size="21.5" fill="#000000" text-anchor="end" textLength="58.0" lengthAdjust="spacingAndGlyphs" style="font-family:'Liberation Mono',monospace;stroke:#f4f4f4;stroke-width:0.25;">66.56</text>
<text x="568.3" y="618.66" font-size="21.5" fill="#000000" text-anchor="end" textLength="58.0" lengthAdjust="spacingAndGlyphs" style="font-family:'Liberation Mono',monospace;stroke:#f4f4f4;stroke-width:0.25;">67.82</text>
<text x="757.5" y="618.66" font-size="21.5" fill="#d9001b" text-anchor="end" textLength="58.0" lengthAdjust="spacingAndGlyphs" style="font-family:'Liberation Mono',monospace;stroke:#e2e9f1;stroke-width:0.25;">-0.02</text>
<text x="930.1" y="618.66" font-size="21.5" fill="#000000" text-anchor="end" textLength="58.0" lengthAdjust="spacingAndGlyphs" style="font-family:'Liberation Mono',monospace;stroke:#f4f4f4;stroke-width:0.25;">69.38</text>
<text x="1067.51" y="618.66" font-size="21.5" fill="#000000" textLength="46.4" lengthAdjust="spacingAndGlyphs" style="font-family:'Liberation Mono',monospace;stroke:#f4f4f4;stroke-width:0.25;">1.56</text>
<text x="99.63" y="651.34" font-size="21.8" fill="#000000" textLength="46.74" lengthAdjust="spacingAndGlyphs" style="stroke:#ffffff;stroke-width:0.25;">Soda</text>
<text x="410.5" y="651.34" font-size="21.5" fill="#000000" text-anchor="end" textLength="58.0" lengthAdjust="spacingAndGlyphs" style="font-family:'Liberation Mono',monospace;stroke:#ffffff;stroke-width:0.25;">76.71</text>
<text x="568.3" y="651.34" font-size="21.5" fill="#000000" text-anchor="end" textLength="58.0" lengthAdjust="spacingAndGlyphs" style="font-family:'Liberation Mono',monospace;stroke:#ffffff;stroke-width:0.25;">40.00</text>
<text x="757.5" y="651.34" font-size="21.5" fill="#d9001b" text-anchor="end" textLength="58.0" lengthAdjust="spacingAndGlyphs" style="font-family:'Liberation Mono',monospace;stroke:#eaf2fb;stroke-width:0.25;">-0.11</text>
<text x="930.1" y="651.34" font-size="21.5" fill="#000000" text-anchor="end" textLength="58.0" lengthAdjust="spacingAndGlyphs" style="font-family:'Liberation Mono',monospace;stroke:#ffffff;stroke-width:0.25;">73.42</text>
<text x="1139.19" y="651.34" font-size="21.5" fill="#000000" textLength="58.0" lengthAdjust="spacingAndGlyphs" style="font-family:'Liberation Mono',monospace;stroke:#ffffff;stroke-width:0.25;">33.42</text>
<text x="99.63" y="684.02" font-size="21.8" fill="#000000" textLength="98.74" lengthAdjust="spacingAndGlyphs" style="stroke:#f4f4f4;stroke-width:0.25;">Tea &amp; Co...</text>
<text x="410.5" y="684.02" font-size="21.5" fill="#000000" text-anchor="end" textLength="58.0" lengthAdjust="spacingAndGlyphs" style="font-family:'Liberation Mono',monospace;stroke:#f4f4f4;stroke-width:0.25;">22.79</text>
<text x="568.3" y="684.02" font-size="21.5" fill="#000000" text-anchor="end" textLength="58.0" lengthAdjust="spacingAndGlyphs" style="font-family:'Liberation Mono',monospace;stroke:#f4f4f4;stroke-width:0.25;">22.59</text>
<text x="757.5" y="684.02" font-size="21.5" fill="#000000" text-anchor="end" textLength="46.4" lengthAdjust="spacingAndGlyphs" style="font-family:'Liberation Mono',monospace;stroke:#e2e9f1;stroke-width:0.25;">0.34</text>
<text x="930.1" y="684.02" font-size="21.5" fill="#000000" text-anchor="end" textLength="58.0" lengthAdjust="spacingAndGlyphs" style="font-family:'Liberation Mono',monospace;stroke:#f4f4f4;stroke-width:0.25;">16.91</text>
<text x="1015.22" y="684.02" font-size="21.5" fill="#000000" text-anchor="end" textLength="58.0" lengthAdjust="spacingAndGlyphs" style="font-family:'Liberation Mono',monospace;stroke:#f4f4f4;stroke-width:0.25;">-5.68</text>
<text x="99.63" y="716.7" font-size="21.8" fill="#000000" textLength="101.74" lengthAdjust="spacingAndGlyphs" style="stroke:#ffffff;stroke-width:0.25;">Sparkling...</text>
<text x="410.5" y="716.7" font-size="21.5" fill="#000000" text-anchor="end" textLength="58.0" lengthAdjust="spacingAndGlyphs" style="font-family:'Liberation Mono',monospace;stroke:#ffffff;stroke-width:0.25;">12.66</text>
<text x="568.3" y="716.7" font-size="21.5" fill="#000000" text-anchor="end" textLength="58.0" lengthAdjust="spacingAndGlyphs" style="font-family:'Liberation Mono',monospace;stroke:#ffffff;stroke-width:0.25;">14.23</text>
<text x="757.5" y="716.7" font-size="21.5" fill="#000000" text-anchor="end" textLength="46.4" lengthAdjust="spacingAndGlyphs" style="font-family:'Liberation Mono',monospace;stroke:#eaf2fb;stroke-width:0.25;">0.22</text>
<text x="930.1" y="716.7" font-size="21.5" fill="#000000" text-anchor="end" textLength="58.0" lengthAdjust="spacingAndGlyphs" style="font-family:'Liberation Mono',monospace;stroke:#ffffff;stroke-width:0.25;">11.67</text>
<text x="1022.24" y="716.7" font-size="21.5" fill="#000000" text-anchor="end" textLength="58.0" lengthAdjust="spacingAndGlyphs" style="font-family:'Liberation Mono',monospace;stroke:#ffffff;stroke-width:0.25;">-2.56</text>
<text x="90.7" y="766.5" font-size="22.38" fill="#000000" stroke="#000000" stroke-width="0.55" textLength="62.09" lengthAdjust="spacingAndGlyphs">Pacific</text>
<text x="410.5" y="766.5" font-size="21.5" fill="#000000" stroke="#000000" stroke-width="0.4" text-anchor="end" textLength="69.6" lengthAdjust="spacingAndGlyphs" style="font-family:'Liberation Mono',monospace;">174.95</text>
<text x="568.3" y="766.5" font-size="21.5" fill="#000000" stroke="#000000" stroke-width="0.4" text-anchor="end" textLength="69.6" lengthAdjust="spacingAndGlyphs" style="font-family:'Liberation Mono',monospace;">149.07</text>
<text x="757.5" y="766.5" font-size="21.5" fill="#000000" stroke="#000000" stroke-width="0.4" text-anchor="end" textLength="58.0" lengthAdjust="spacingAndGlyphs" style="font-family:'Liberation Mono',monospace;">-0.08</text>
<text x="930.1" y="766.5" font-size="21.5" fill="#000000" stroke="#000000" stroke-width="0.4" text-anchor="end" textLength="69.6" lengthAdjust="spacingAndGlyphs" style="font-family:'Liberation Mono',monospace;">188.61</text>
<text x="1152.99" y="766.5" font-size="21.5" fill="#000000" stroke="#000000" stroke-width="0.4" textLength="58.0" lengthAdjust="spacingAndGlyphs" style="font-family:'Liberation Mono',monospace;">39.55</text>
<text x="99.63" y="799.18" font-size="21.8" fill="#000000" textLength="55.54" lengthAdjust="spacingAndGlyphs" style="stroke:#ffffff;stroke-width:0.25;">Juices</text>
<text x="410.5" y="799.18" font-size="21.5" fill="#000000" text-anchor="end" textLength="58.0" lengthAdjust="spacingAndGlyphs" style="font-family:'Liberation Mono',monospace;stroke:#ffffff;stroke-width:0.25;">66.15</text>
<text x="568.3" y="799.18" font-size="21.5" fill="#000000" text-anchor="end" textLength="58.0" lengthAdjust="spacingAndGlyphs" style="font-family:'Liberation Mono',monospace;stroke:#ffffff;stroke-width:0.25;">67.52</text>
<text x="757.5" y="799.18" font-size="21.5" fill="#d9001b" text-anchor="end" textLength="58.0" lengthAdjust="spacingAndGlyphs" style="font-family:'Liberation Mono',monospace;stroke:#eaf2fb;stroke-width:0.25;">-0.16</text>
<text x="930.1" y="799.18" font-size="21.5" fill="#000000" text-anchor="end" textLength="58.0" lengthAdjust="spacingAndGlyphs" style="font-family:'Liberation Mono',monospace;stroke:#ffffff;stroke-width:0.25;">80.26</text>
<text x="1092.66" y="799.18" font-size="21.5" fill="#000000" textLength="58.0" lengthAdjust="spacingAndGlyphs" style="font-family:'Liberation Mono',monospace;stroke:#ffffff;stroke-width:0.25;">12.74</text>
<text x="99.63" y="831.86" font-size="21.8" fill="#000000" textLength="90.64" lengthAdjust="spacingAndGlyphs" style="stroke:#f4f4f4;stroke-width:0.25;">Mineral ...</text>
<text x="410.5" y="831.86" font-size="21.5" fill="#000000" text-anchor="end" textLength="58.0" lengthAdjust="spacingAndGlyphs" style="font-family:'Liberation Mono',monospace;stroke:#f4f4f4;stroke-width:0.25;">43.17</text>
<text x="568.3" y="831.86" font-size="21.5" fill="#000000" text-anchor="end" textLength="58.0" lengthAdjust="spacingAndGlyphs" style="font-family:'Liberation Mono',monospace;stroke:#f4f4f4;stroke-width:0.25;">44.34</text>
<text x="757.5" y="831.86" font-size="21.5" fill="#000000" text-anchor="end" textLength="46.4" lengthAdjust="spacingAndGlyphs" style="font-family:'Liberation Mono',monospace;stroke:#e2e9f1;stroke-width:0.25;">0.02</text>
<text x="930.1" y="831.86" font-size="21.5" fill="#000000" text-anchor="end" textLength="58.0" lengthAdjust="spacingAndGlyphs" style="font-family:'Liberation Mono',monospace;stroke:#f4f4f4;stroke-width:0.25;">43.65</text>
<text x="1026.45" y="831.86" font-size="21.5" fill="#000000" text-anchor="end" textLength="58.0" lengthAdjust="spacingAndGlyphs" style="font-family:'Liberation Mono',monospace;stroke:#f4f4f4;stroke-width:0.25;">-0.69</text>
<text x="99.63" y="864.54" font-size="21.8" fill="#000000" textLength="46.74" lengthAdjust="spacingAndGlyphs" style="stroke:#ffffff;stroke-width:0.25;">Soda</text>
<text x="410.5" y="864.54" font-size="21.5" fill="#000000" text-anchor="end" textLength="58.0" lengthAdjust="spacingAndGlyphs" style="font-family:'Liberation Mono',monospace;stroke:#ffffff;stroke-width:0.25;">41.87</text>
<text x="568.3" y="864.54" font-size="21.5" fill="#000000" text-anchor="end" textLength="58.0" lengthAdjust="spacingAndGlyphs" style="font-family:'Liberation Mono',monospace;stroke:#ffffff;stroke-width:0.25;">15.00</text>
<text x="757.5" y="864.54" font-size="21.5" fill="#d9001b" text-anchor="end" textLength="58.0" lengthAdjust="spacingAndGlyphs" style="font-family:'Liberation Mono',monospace;stroke:#eaf2fb;stroke-width:0.25;">-0.11</text>
<text x="930.1" y="864.54" font-size="21.5" fill="#000000" text-anchor="end" textLength="58.0" lengthAdjust="spacingAndGlyphs" style="font-family:'Liberation Mono',monospace;stroke:#ffffff;stroke-width:0.25;">44.40</text>
<text x="1130.15" y="864.54" font-size="21.5" fill="#000000" textLength="58.0" lengthAdjust="spacingAndGlyphs" style="font-family:'Liberation Mono',monospace;stroke:#ffffff;stroke-width:0.25;">29.40</text>
<text x="99.63" y="897.22" font-size="21.8" fill="#000000" textLength="98.74" lengthAdjust="spacingAndGlyphs" style="stroke:#f4f4f4;stroke-width:0.25;">Tea &amp; Co...</text>
<text x="410.5" y="897.22" font-size="21.5" fill="#000000" text-anchor="end" textLength="58.0" lengthAdjust="spacingAndGlyphs" style="font-family:'Liberation Mono',monospace;stroke:#f4f4f4;stroke-width:0.25;">16.39</text>
<text x="568.3" y="897.22" font-size="21.5" fill="#000000" text-anchor="end" textLength="58.0" lengthAdjust="spacingAndGlyphs" style="font-family:'Liberation Mono',monospace;stroke:#f4f4f4;stroke-width:0.25;">15.83</text>
<text x="757.5" y="897.22" font-size="21.5" fill="#000000" text-anchor="end" textLength="46.4" lengthAdjust="spacingAndGlyphs" style="font-family:'Liberation Mono',monospace;stroke:#e2e9f1;stroke-width:0.25;">0.25</text>
<text x="930.1" y="897.22" font-size="21.5" fill="#000000" text-anchor="end" textLength="58.0" lengthAdjust="spacingAndGlyphs" style="font-family:'Liberation Mono',monospace;stroke:#f4f4f4;stroke-width:0.25;">12.68</text>
<text x="1020.91" y="897.22" font-size="21.5" fill="#000000" text-anchor="end" textLength="58.0" lengthAdjust="spacingAndGlyphs" style="font-family:'Liberation Mono',monospace;stroke:#f4f4f4;stroke-width:0.25;">-3.15</text>
<text x="99.63" y="929.9" font-size="21.8" fill="#000000" textLength="101.74" lengthAdjust="spacingAndGlyphs" style="stroke:#ffffff;stroke-width:0.25;">Sparkling...</text>
<text x="410.5" y="929.9" font-size="21.5" fill="#000000" text-anchor="end" textLength="46.4" lengthAdjust="spacingAndGlyphs" style="font-family:'Liberation Mono',monospace;stroke:#ffffff;stroke-width:0.25;">7.38</text>
<text x="568.3" y="929.9" font-size="21.5" fill="#000000" text-anchor="end" textLength="46.4" lengthAdjust="spacingAndGlyphs" style="font-family:'Liberation Mono',monospace;stroke:#ffffff;stroke-width:0.25;">6.38</text>
<text x="757.5" y="929.9" font-size="21.5" fill="#d9001b" text-anchor="end" textLength="58.0" lengthAdjust="spacingAndGlyphs" style="font-family:'Liberation Mono',monospace;stroke:#eaf2fb;stroke-width:0.25;">-0.16</text>
<text x="930.1" y="929.9" font-size="21.5" fill="#000000" text-anchor="end" textLength="46.4" lengthAdjust="spacingAndGlyphs" style="font-family:'Liberation Mono',monospace;stroke:#ffffff;stroke-width:0.25;">7.63</text>
<text x="1066.81" y="929.9" font-size="21.5" fill="#000000" textLength="46.4" lengthAdjust="spacingAndGlyphs" style="font-family:'Liberation Mono',monospace;stroke:#ffffff;stroke-width:0.25;">1.25</text>
<text x="90.7" y="979.7" font-size="22.38" fill="#000000" stroke="#000000" stroke-width="0.55" textLength="70.79" lengthAdjust="spacingAndGlyphs">Central</text>
<text x="410.5" y="979.7" font-size="21.5" fill="#000000" stroke="#000000" stroke-width="0.4" text-anchor="end" textLength="69.6" lengthAdjust="spacingAndGlyphs" style="font-family:'Liberation Mono',monospace;">130.72</text>
<text x="568.3" y="979.7" font-size="21.5" fill="#000000" stroke="#000000" stroke-width="0.4" text-anchor="end" textLength="69.6" lengthAdjust="spacingAndGlyphs" style="font-family:'Liberation Mono',monospace;">135.13</text>
<text x="757.5" y="979.7" font-size="21.5" fill="#000000" stroke="#000000" stroke-width="0.4" text-anchor="end" textLength="46.4" lengthAdjust="spacingAndGlyphs" style="font-family:'Liberation Mono',monospace;">0.01</text>
<text x="930.1" y="979.7" font-size="21.5" fill="#000000" stroke="#000000" stroke-width="0.4" text-anchor="end" textLength="69.6" lengthAdjust="spacingAndGlyphs" style="font-family:'Liberation Mono',monospace;">133.57</text>
<text x="1024.49" y="979.7" font-size="21.5" fill="#000000" stroke="#000000" stroke-width="0.4" text-anchor="end" textLength="58.0" lengthAdjust="spacingAndGlyphs" style="font-family:'Liberation Mono',monospace;">-1.56</text>
<text x="99.63" y="1012.38" font-size="21.8" fill="#000000" textLength="55.54" lengthAdjust="spacingAndGlyphs" style="stroke:#ffffff;stroke-width:0.25;">Juices</text>
<text x="410.5" y="1012.38" font-size="21.5" fill="#000000" text-anchor="end" textLength="58.0" lengthAdjust="spacingAndGlyphs" style="font-family:'Liberation Mono',monospace;stroke:#ffffff;stroke-width:0.25;">50.29</text>
<text x="568.3" y="1012.38" font-size="21.5" fill="#000000" text-anchor="end" textLength="58.0" lengthAdjust="spacingAndGlyphs" style="font-family:'Liberation Mono',monospace;stroke:#ffffff;stroke-width:0.25;">53.63</text>
<text x="757.5" y="1012.38" font-size="21.5" fill="#000000" text-anchor="end" textLength="46.4" lengthAdjust="spacingAndGlyphs" style="font-family:'Liberation Mono',monospace;stroke:#eaf2fb;stroke-width:0.25;">0.01</text>
<text x="930.1" y="1012.38" font-size="21.5" fill="#000000" text-anchor="end" textLength="58.0" lengthAdjust="spacingAndGlyphs" style="font-family:'Liberation Mono',monospace;stroke:#ffffff;stroke-width:0.25;">52.97</text>
<text x="1026.54" y="1012.38" font-size="21.5" fill="#000000" text-anchor="end" textLength="58.0" lengthAdjust="spacingAndGlyphs" style="font-family:'Liberation Mono',monospace;stroke:#ffffff;stroke-width:0.25;">-0.65</text>
<text x="99.63" y="1045.06" font-size="21.8" fill="#000000" textLength="46.74" lengthAdjust="spacingAndGlyphs" style="stroke:#f4f4f4;stroke-width:0.25;">Soda</text>
<text x="410.5" y="1045.06" font-size="21.5" fill="#000000" text-anchor="end" textLength="58.0" lengthAdjust="spacingAndGlyphs" style="font-family:'Liberation Mono',monospace;stroke:#f4f4f4;stroke-width:0.25;">39.03</text>
<text x="568.3" y="1045.06" font-size="21.5" fill="#000000" text-anchor="end" textLength="58.0" lengthAdjust="spacingAndGlyphs" style="font-family:'Liberation Mono',monospace;stroke:#f4f4f4;stroke-width:0.25;">33.64</text>
<text x="757.5" y="1045.06" font-size="21.5" fill="#d9001b" text-anchor="end" textLength="58.0" lengthAdjust="spacingAndGlyphs" style="font-family:'Liberation Mono',monospace;stroke:#e2e9f1;stroke-width:0.25;">-0.07</text>
<text x="930.1" y="1045.06" font-size="21.5" fill="#000000" text-anchor="end" textLength="58.0" lengthAdjust="spacingAndGlyphs" style="font-family:'Liberation Mono',monospace;stroke:#f4f4f4;stroke-width:0.25;">36.28</text>
<text x="1069.94" y="1045.06" font-size="21.5" fill="#000000" textLength="46.4" lengthAdjust="spacingAndGlyphs" style="font-family:'Liberation Mono',monospace;stroke:#f4f4f4;stroke-width:0.25;">2.64</text>
<text x="99.63" y="1077.74" font-size="21.8" fill="#000000" textLength="90.64" lengthAdjust="spacingAndGlyphs" style="stroke:#ffffff;stroke-width:0.25;">Mineral ...</text>
<text x="410.5" y="1077.74" font-size="21.5" fill="#000000" text-anchor="end" textLength="58.0" lengthAdjust="spacingAndGlyphs" style="font-family:'Liberation Mono',monospace;stroke:#ffffff;stroke-width:0.25;">26.42</text>
<text x="568.3" y="1077.74" font-size="21.5" fill="#000000" text-anchor="end" textLength="58.0" lengthAdjust="spacingAndGlyphs" style="font-family:'Liberation Mono',monospace;stroke:#ffffff;stroke-width:0.25;">29.91</text>
<text x="757.5" y="1077.74" font-size="21.5" fill="#000000" text-anchor="end" textLength="46.4" lengthAdjust="spacingAndGlyphs" style="font-family:'Liberation Mono',monospace;stroke:#eaf2fb;stroke-width:0.25;">0.08</text>
<text x="930.1" y="1077.74" font-size="21.5" fill="#000000" text-anchor="end" textLength="58.0" lengthAdjust="spacingAndGlyphs" style="font-family:'Liberation Mono',monospace;stroke:#ffffff;stroke-width:0.25;">27.80</text>
<text x="1023.25" y="1077.74" font-size="21.5" fill="#000000" text-anchor="end" textLength="58.0" lengthAdjust="spacingAndGlyphs" style="font-family:'Liberation Mono',monospace;stroke:#ffffff;stroke-width:0.25;">-2.11</text>
<text x="99.63" y="1110.42" font-size="21.8" fill="#000000" textLength="98.74" lengthAdjust="spacingAndGlyphs" style="stroke:#f4f4f4;stroke-width:0.25;">Tea &amp; Co...</text>
<text x="410.5" y="1110.42" font-size="21.5" fill="#000000" text-anchor="end" textLength="58.0" lengthAdjust="spacingAndGlyphs" style="font-family:'Liberation Mono',monospace;stroke:#f4f4f4;stroke-width:0.25;">10.25</text>
<text x="568.3" y="1110.42" font-size="21.5" fill="#000000" text-anchor="end" textLength="58.0" lengthAdjust="spacingAndGlyphs" style="font-family:'Liberation Mono',monospace;stroke:#f4f4f4;stroke-width:0.25;">13.44</text>
<text x="757.5" y="1110.42" font-size="21.5" fill="#000000" text-anchor="end" textLength="46.4" lengthAdjust="spacingAndGlyphs" style="font-family:'Liberation Mono',monospace;stroke:#e2e9f1;stroke-width:0.25;">0.14</text>
<text x="930.1" y="1110.42" font-size="21.5" fill="#000000" text-anchor="end" textLength="58.0" lengthAdjust="spacingAndGlyphs" style="font-family:'Liberation Mono',monospace;stroke:#f4f4f4;stroke-width:0.25;">11.75</text>
<text x="1024.2" y="1110.42" font-size="21.5" fill="#000000" text-anchor="end" textLength="58.0" lengthAdjust="spacingAndGlyphs" style="font-family:'Liberation Mono',monospace;stroke:#f4f4f4;stroke-width:0.25;">-1.69</text>
<text x="99.63" y="1143.1" font-size="21.8" fill="#000000" textLength="101.74" lengthAdjust="spacingAndGlyphs" style="stroke:#ffffff;stroke-width:0.25;">Sparkling...</text>
<text x="410.5" y="1143.1" font-size="21.5" fill="#000000" text-anchor="end" textLength="46.4" lengthAdjust="spacingAndGlyphs" style="font-family:'Liberation Mono',monospace;stroke:#ffffff;stroke-width:0.25;">4.73</text>
<text x="568.3" y="1143.1" font-size="21.5" fill="#000000" text-anchor="end" textLength="46.4" lengthAdjust="spacingAndGlyphs" style="font-family:'Liberation Mono',monospace;stroke:#ffffff;stroke-width:0.25;">4.51</text>
<text x="757.5" y="1143.1" font-size="21.5" fill="#d9001b" text-anchor="end" textLength="58.0" lengthAdjust="spacingAndGlyphs" style="font-family:'Liberation Mono',monospace;stroke:#eaf2fb;stroke-width:0.25;">-0.05</text>
<text x="930.1" y="1143.1" font-size="21.5" fill="#000000" text-anchor="end" textLength="46.4" lengthAdjust="spacingAndGlyphs" style="font-family:'Liberation Mono',monospace;stroke:#ffffff;stroke-width:0.25;">4.76</text>
<text x="1064.59" y="1143.1" font-size="21.5" fill="#000000" textLength="46.4" lengthAdjust="spacingAndGlyphs" style="font-family:'Liberation Mono',monospace;stroke:#ffffff;stroke-width:0.25;">0.26</text>
<text x="90.7" y="1192.9" font-size="22.38" fill="#000000" stroke="#000000" stroke-width="0.55" textLength="78.79" lengthAdjust="spacingAndGlyphs">Midwest</text>
<text x="410.5" y="1192.9" font-size="21.5" fill="#000000" stroke="#000000" stroke-width="0.4" text-anchor="end" textLength="69.6" lengthAdjust="spacingAndGlyphs" style="font-family:'Liberation Mono',monospace;">106.88</text>
<text x="568.3" y="1192.9" font-size="21.5" fill="#000000" stroke="#000000" stroke-width="0.4" text-anchor="end" textLength="69.6" lengthAdjust="spacingAndGlyphs" style="font-family:'Liberation Mono',monospace;">116.60</text>
<text x="757.5" y="1192.9" font-size="21.5" fill="#000000" stroke="#000000" stroke-width="0.4" text-anchor="end" textLength="46.4" lengthAdjust="spacingAndGlyphs" style="font-family:'Liberation Mono',monospace;">0.02</text>
<text x="930.1" y="1192.9" font-size="21.5" fill="#000000" stroke="#000000" stroke-width="0.4" text-anchor="end" textLength="69.6" lengthAdjust="spacingAndGlyphs" style="font-family:'Liberation Mono',monospace;">114.07</text>
<text x="1022.31" y="1192.9" font-size="21.5" fill="#000000" stroke="#000000" stroke-width="0.4" text-anchor="end" textLength="58.0" lengthAdjust="spacingAndGlyphs" style="font-family:'Liberation Mono',monospace;">-2.53</text>
<text x="99.63" y="1225.58" font-size="21.8" fill="#000000" textLength="55.54" lengthAdjust="spacingAndGlyphs" style="stroke:#ffffff;stroke-width:0.25;">Juices</text>
<text x="410.5" y="1225.58" font-size="21.5" fill="#000000" text-anchor="end" textLength="58.0" lengthAdjust="spacingAndGlyphs" style="font-family:'Liberation Mono',monospace;stroke:#ffffff;stroke-width:0.25;">50.17</text>
<text x="568.3" y="1225.58" font-size="21.5" fill="#000000" text-anchor="end" textLength="58.0" lengthAdjust="spacingAndGlyphs" style="font-family:'Liberation Mono',monospace;stroke:#ffffff;stroke-width:0.25;">53.17</text>
<text x="757.5" y="1225.58" font-size="21.5" fill="#000000" text-anchor="end" textLength="46.4" lengthAdjust="spacingAndGlyphs" style="font-family:'Liberation Mono',monospace;stroke:#eaf2fb;stroke-width:0.25;">0.01</text>
<text x="930.1" y="1225.58" font-size="21.5" fill="#000000" text-anchor="end" textLength="58.0" lengthAdjust="spacingAndGlyphs" style="font-family:'Liberation Mono',monospace;stroke:#ffffff;stroke-width:0.25;">52.47</text>
<text x="1026.45" y="1225.58" font-size="21.5" fill="#000000" text-anchor="end" textLength="58.0" lengthAdjust="spacingAndGlyphs" style="font-family:'Liberation Mono',monospace;stroke:#ffffff;stroke-width:0.25;">-0.69</text>
<text x="437.6" y="646.2" font-size="14.5" fill="#fff" textLength="7.6" lengthAdjust="spacingAndGlyphs">1</text>
<text x="274" y="106.5" font-size="24" fill="#3b3a39" font-weight="700" textLength="28.5" lengthAdjust="spacingAndGlyphs">ab</text>
<text x="881" y="103.6" font-size="21" fill="#ffffff" font-weight="700" textLength="11" lengthAdjust="spacingAndGlyphs">1</text>
<text x="1627.8" y="114.6" font-size="16" fill="#ffffff" font-weight="700" textLength="13" lengthAdjust="spacingAndGlyphs">X</text>
<text x="1759.5" y="538.8" font-size="31" fill="#252423" font-weight="700" textLength="21" lengthAdjust="spacingAndGlyphs">B</text>
<text x="1811.5" y="538.8" font-size="31" fill="#252423" textLength="12" lengthAdjust="spacingAndGlyphs" style="font-family:'Liberation Serif',serif;font-style:italic">I</text>
<text x="1856" y="538.8" font-size="31" fill="#252423" textLength="23.5" lengthAdjust="spacingAndGlyphs" style="stroke:#f4f4f4;stroke-width:0.6">U</text>
<text x="2008" y="538.8" font-size="35" fill="#252423" textLength="20.5" lengthAdjust="spacingAndGlyphs" style="stroke:#f4f4f4;stroke-width:0.8">A</text>
<text x="2216.09" y="538" font-size="22.67" fill="#252423" textLength="41.31" lengthAdjust="spacingAndGlyphs" style="stroke:#f4f4f4;stroke-width:0.25;">Icon</text>
</svg>
</body></html>
